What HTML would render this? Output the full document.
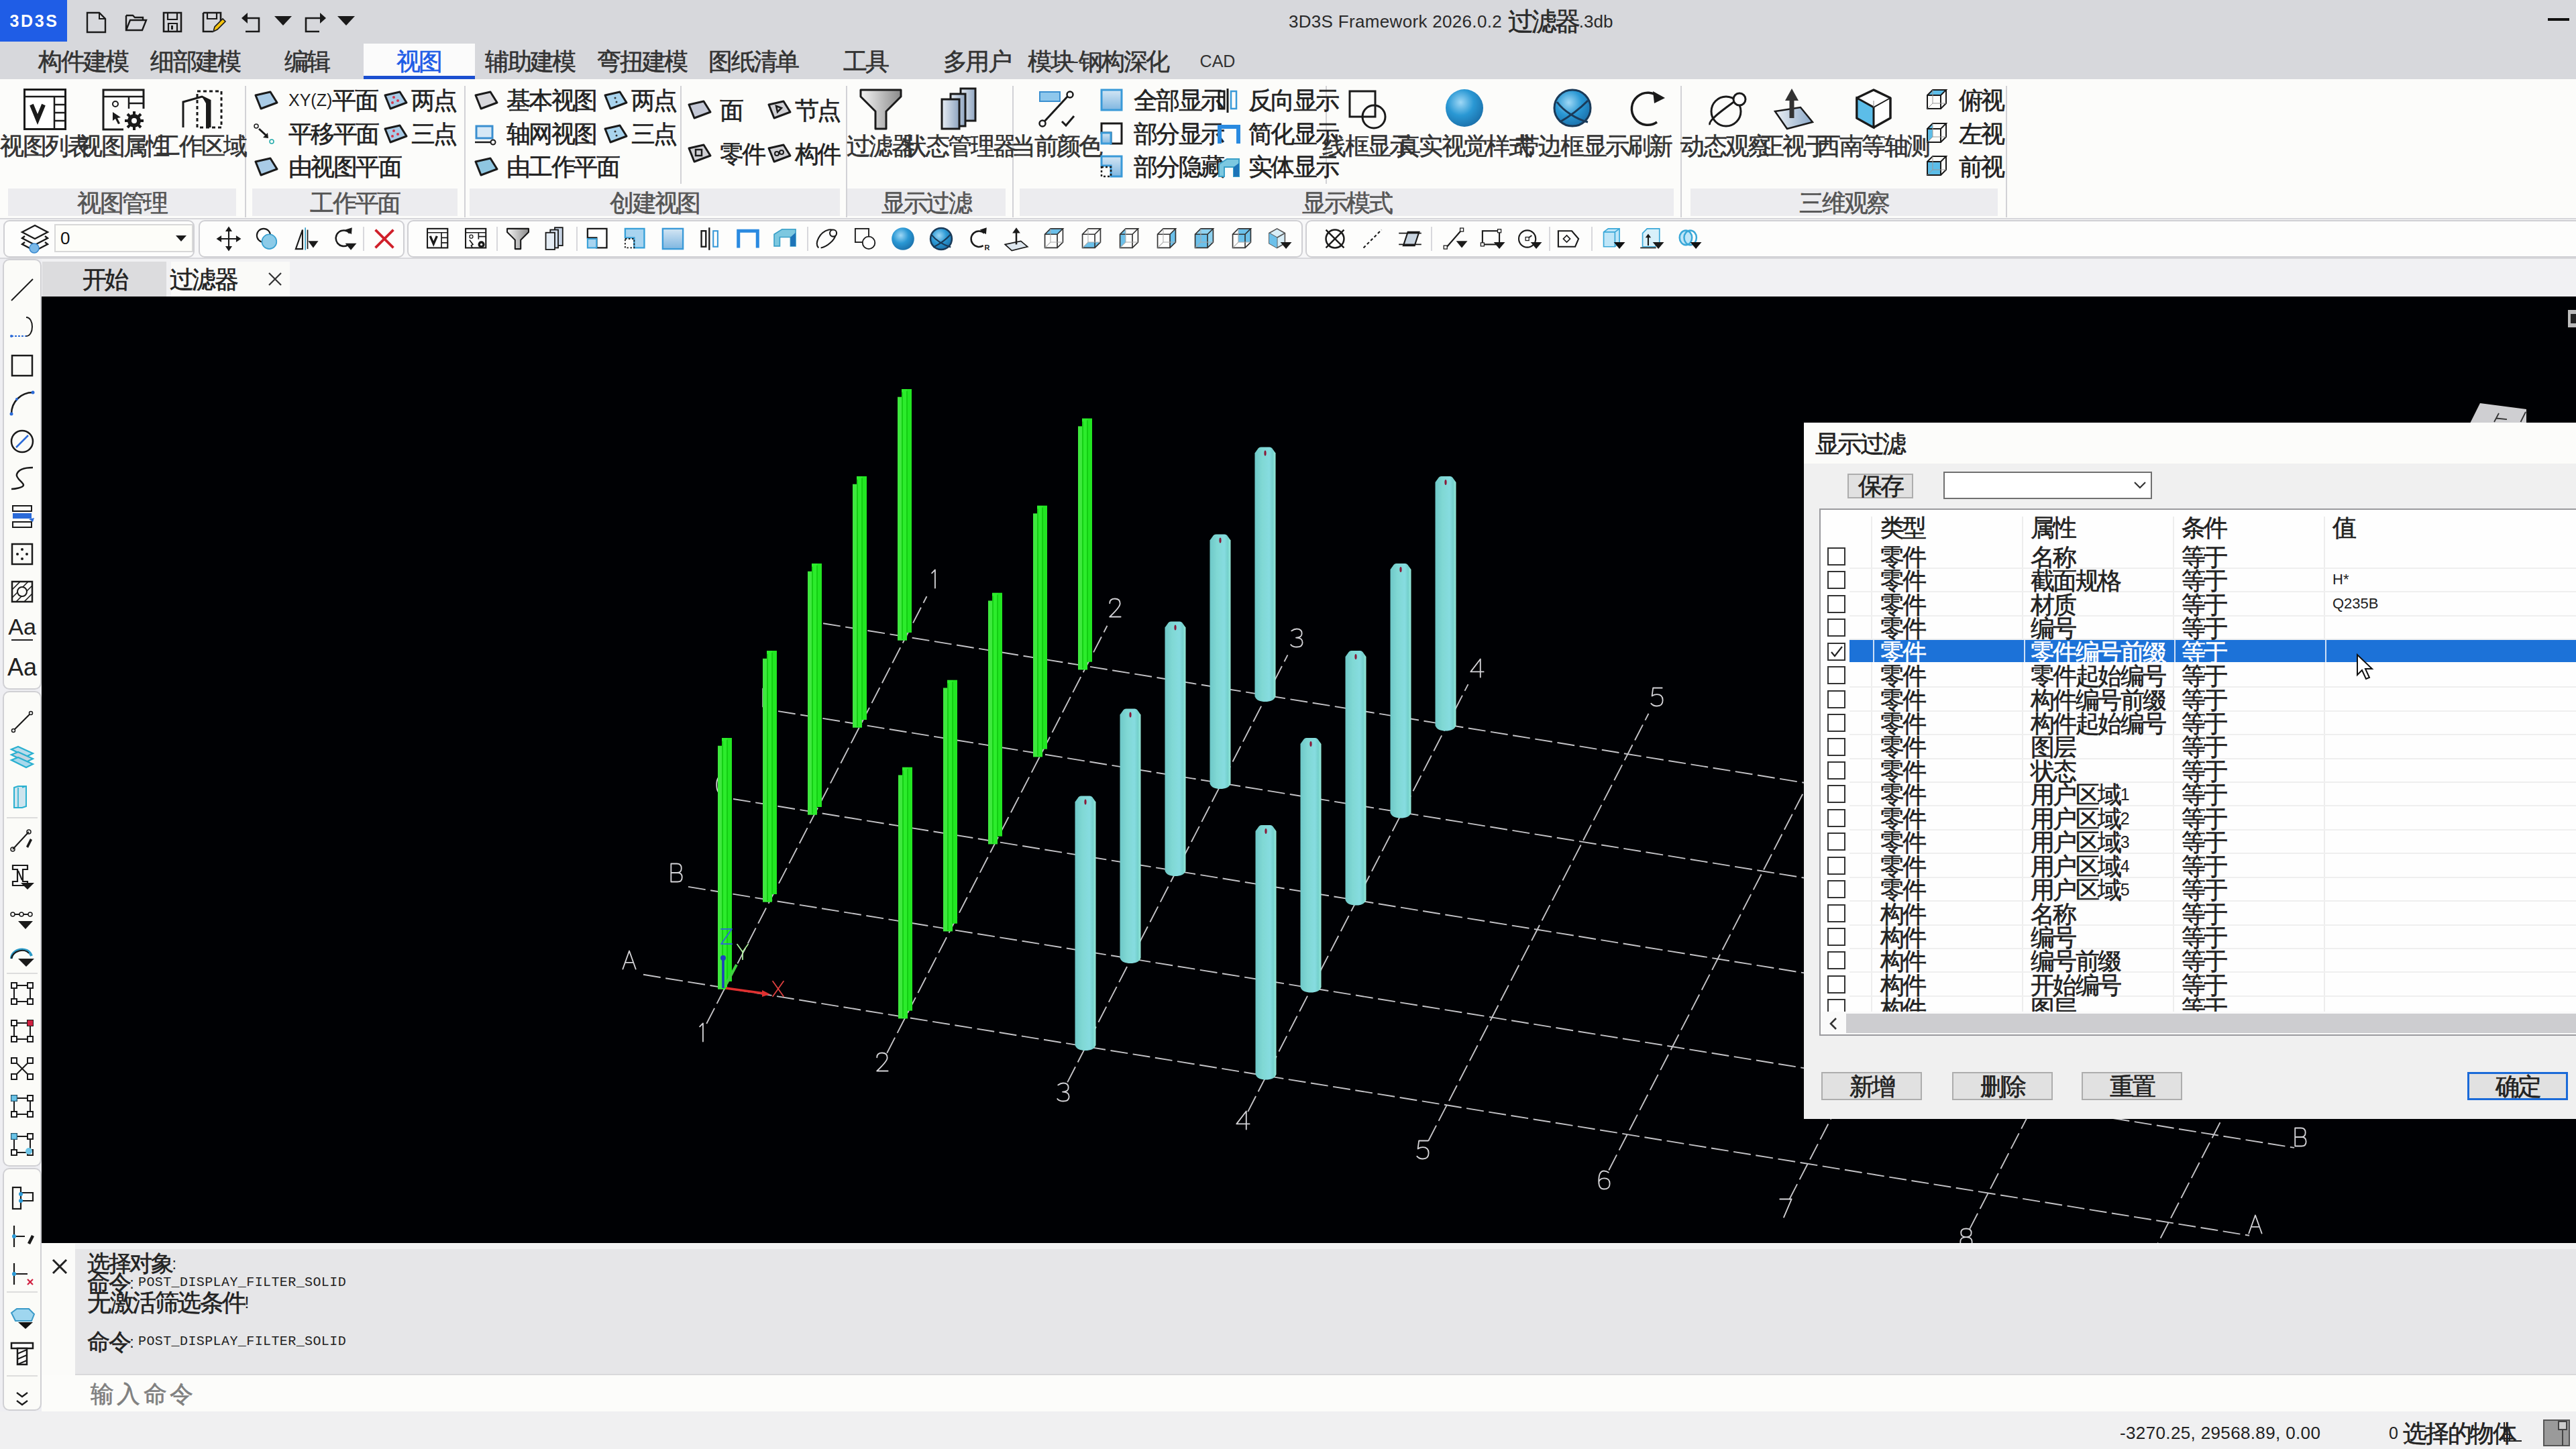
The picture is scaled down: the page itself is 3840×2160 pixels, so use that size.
<!DOCTYPE html>
<html><head><meta charset="utf-8"><title>3D3S Framework</title>
<style>
html,body{margin:0;padding:0}
body{width:3840px;height:2160px;overflow:hidden;position:relative;background:#eeeef2;font-family:"Liberation Sans",sans-serif}
.a{position:absolute}
.t{position:absolute;white-space:nowrap}
.c{font-size:1.45em;letter-spacing:-0.07em;vertical-align:-0.1em;-webkit-text-stroke:0.6px currentColor}
svg{overflow:visible}
</style></head><body>

<div class="a" style="left:0px;top:0px;width:3840px;height:118px;background:#d7d8dc;"></div>
<div class="a" style="left:0px;top:0px;width:100px;height:62px;background:#1f5de6;"></div>
<div class="t" style="top:13.5px;height:35.0px;line-height:35.0px;font-size:25px;color:#ffffff;left:-549.0px;width:1200px;text-align:center;font-weight:bold;letter-spacing:2.6px;">3D3S</div>
<svg class="a" style="left:127px;top:17px;" width="34" height="32" viewBox="0 0 34 32"><path d="M3 2h18l9 9v20H3z" fill="none" stroke="#1a1a1a" stroke-width="2.4"/><path d="M21 2v9h9" fill="none" stroke="#1a1a1a" stroke-width="2"/></svg>
<svg class="a" style="left:186px;top:17px;" width="34" height="32" viewBox="0 0 34 32"><path d="M2 6h10l3 3h12v4" fill="none" stroke="#1a1a1a" stroke-width="2.4"/><path d="M2 6v22h24l6-15H8L2 28" fill="none" stroke="#1a1a1a" stroke-width="2.4"/></svg>
<svg class="a" style="left:241px;top:17px;" width="34" height="32" viewBox="0 0 34 32"><path d="M3 2h26v28H3z" fill="none" stroke="#1a1a1a" stroke-width="2.6"/><path d="M9 2v10h14V2M10 30V18h13v12" fill="none" stroke="#1a1a1a" stroke-width="2.2"/><rect x="14" y="21" width="3" height="6" fill="#1a1a1a"/></svg>
<svg class="a" style="left:300px;top:17px;" width="36" height="32" viewBox="0 0 36 32"><path d="M3 2h26v12M3 2v28h14" fill="none" stroke="#1a1a1a" stroke-width="2.6"/><path d="M9 2v9h14V2" fill="none" stroke="#1a1a1a" stroke-width="2.2"/><path d="M18 30l2-7 12-12 4 4-12 12z" fill="#f4c20d" stroke="#1a1a1a" stroke-width="1.6"/></svg>
<svg class="a" style="left:360px;top:17px;" width="34" height="32" viewBox="0 0 34 32"><path d="M8 10h18v20H6" fill="none" stroke="#1a1a1a" stroke-width="2.6"/><path d="M0 10l9-8v16z" fill="#1a1a1a"/></svg>
<svg class="a" style="left:409px;top:24px;" width="26" height="16" viewBox="0 0 26 16"><path d="M0 0h26L13 14z" fill="#1a1a1a"/></svg>
<svg class="a" style="left:452px;top:17px;" width="34" height="32" viewBox="0 0 34 32"><path d="M26 10H4v20h20" fill="none" stroke="#1a1a1a" stroke-width="2.6"/><path d="M34 10l-9-8v16z" fill="#1a1a1a"/></svg>
<svg class="a" style="left:503px;top:24px;" width="26" height="16" viewBox="0 0 26 16"><path d="M0 0h26L13 14z" fill="#1a1a1a"/></svg>
<div class="t" style="top:13.8px;height:36.4px;line-height:36.4px;font-size:26px;color:#2a2a2a;left:1480.0px;width:1200px;text-align:center;letter-spacing:0.32px;">3D3S Framework 2026.0.2</div>
<div class="t" style="top:13.8px;height:36.4px;line-height:36.4px;font-size:26px;color:#2a2a2a;left:1726.0px;width:1200px;text-align:center;"><span class="c">过滤器</span>.3db</div>
<div class="a" style="left:3798px;top:27px;width:32px;height:4px;background:#111;"></div>
<div class="a" style="left:542px;top:65px;width:166px;height:53px;background:#fbfbfb;"></div>
<div class="a" style="left:542px;top:113px;width:166px;height:5px;background:#1b4fd0;"></div>
<div class="t" style="top:73.5px;height:35.0px;line-height:35.0px;font-size:25px;color:#333;left:-476.0px;width:1200px;text-align:center;"><span class="c">构件建模</span></div>
<div class="t" style="top:73.5px;height:35.0px;line-height:35.0px;font-size:25px;color:#333;left:-309.0px;width:1200px;text-align:center;"><span class="c">细部建模</span></div>
<div class="t" style="top:73.5px;height:35.0px;line-height:35.0px;font-size:25px;color:#333;left:-143.0px;width:1200px;text-align:center;"><span class="c">编辑</span></div>
<div class="t" style="top:73.5px;height:35.0px;line-height:35.0px;font-size:25px;color:#1f5de6;left:24.0px;width:1200px;text-align:center;"><span class="c">视图</span></div>
<div class="t" style="top:73.5px;height:35.0px;line-height:35.0px;font-size:25px;color:#333;left:190.0px;width:1200px;text-align:center;"><span class="c">辅助建模</span></div>
<div class="t" style="top:73.5px;height:35.0px;line-height:35.0px;font-size:25px;color:#333;left:357.0px;width:1200px;text-align:center;"><span class="c">弯扭建模</span></div>
<div class="t" style="top:73.5px;height:35.0px;line-height:35.0px;font-size:25px;color:#333;left:523.0px;width:1200px;text-align:center;"><span class="c">图纸清单</span></div>
<div class="t" style="top:73.5px;height:35.0px;line-height:35.0px;font-size:25px;color:#333;left:690.0px;width:1200px;text-align:center;"><span class="c">工具</span></div>
<div class="t" style="top:73.5px;height:35.0px;line-height:35.0px;font-size:25px;color:#333;left:856.0px;width:1200px;text-align:center;"><span class="c">多用户</span></div>
<div class="t" style="top:73.5px;height:35.0px;line-height:35.0px;font-size:25px;color:#333;left:1037.0px;width:1200px;text-align:center;"><span class="c">模块</span>-<span class="c">钢构深化</span></div>
<div class="t" style="top:73.5px;height:35.0px;line-height:35.0px;font-size:25px;color:#333;left:1215.0px;width:1200px;text-align:center;">CAD</div>
<div class="a" style="left:0px;top:118px;width:3840px;height:208px;background:#fcfcfa;"></div>
<div class="a" style="left:0px;top:325px;width:3840px;height:2px;background:#d6d6da;"></div>
<div class="a" style="left:12px;top:281px;width:340px;height:41px;background:#ececef;"></div>
<div class="t" style="top:284.5px;height:35.0px;line-height:35.0px;font-size:25px;color:#555;left:-418.0px;width:1200px;text-align:center;"><span class="c">视图管理</span></div>
<div class="a" style="left:376px;top:281px;width:306px;height:41px;background:#ececef;"></div>
<div class="t" style="top:284.5px;height:35.0px;line-height:35.0px;font-size:25px;color:#555;left:-71.0px;width:1200px;text-align:center;"><span class="c">工作平面</span></div>
<div class="a" style="left:700px;top:281px;width:552px;height:41px;background:#ececef;"></div>
<div class="t" style="top:284.5px;height:35.0px;line-height:35.0px;font-size:25px;color:#555;left:376.0px;width:1200px;text-align:center;"><span class="c">创建视图</span></div>
<div class="a" style="left:1262px;top:281px;width:237px;height:41px;background:#ececef;"></div>
<div class="t" style="top:284.5px;height:35.0px;line-height:35.0px;font-size:25px;color:#555;left:780.5px;width:1200px;text-align:center;"><span class="c">显示过滤</span></div>
<div class="a" style="left:1520px;top:281px;width:975px;height:41px;background:#ececef;"></div>
<div class="t" style="top:284.5px;height:35.0px;line-height:35.0px;font-size:25px;color:#555;left:1407.5px;width:1200px;text-align:center;"><span class="c">显示模式</span></div>
<div class="a" style="left:2520px;top:281px;width:458px;height:41px;background:#ececef;"></div>
<div class="t" style="top:284.5px;height:35.0px;line-height:35.0px;font-size:25px;color:#555;left:2149.0px;width:1200px;text-align:center;"><span class="c">三维观察</span></div>
<div class="a" style="left:365px;top:128px;width:2px;height:196px;background:#d2d2d6;"></div>
<div class="a" style="left:692px;top:128px;width:2px;height:196px;background:#d2d2d6;"></div>
<div class="a" style="left:1014px;top:128px;width:2px;height:146px;background:#d2d2d6;"></div>
<div class="a" style="left:1261px;top:128px;width:2px;height:196px;background:#d2d2d6;"></div>
<div class="a" style="left:1509px;top:128px;width:2px;height:196px;background:#d2d2d6;"></div>
<div class="a" style="left:1976px;top:128px;width:2px;height:146px;background:#d2d2d6;"></div>
<div class="a" style="left:2505px;top:128px;width:2px;height:196px;background:#d2d2d6;"></div>
<div class="a" style="left:2990px;top:128px;width:2px;height:196px;background:#d2d2d6;"></div>
<svg class="a" style="left:35px;top:132px;" width="64" height="62" viewBox="0 0 64 62"><rect x="1.5" y="1.5" width="61" height="59" fill="#fff" stroke="#1a1a1a" stroke-width="3"/><path d="M2 12h60M46 12v48M46 24h16M46 36h16M46 48h16" stroke="#1a1a1a" stroke-width="2.5" fill="none"/><path d="M12 24l9 22 9-22" fill="none" stroke="#1a1a1a" stroke-width="6"/></svg>
<svg class="a" style="left:152px;top:132px;" width="64" height="62" viewBox="0 0 64 62"><path d="M32 61H2V2h60v28" fill="none" stroke="#1a1a1a" stroke-width="3"/><path d="M2 12h60M40 12v18M40 22h22" stroke="#1a1a1a" stroke-width="2.5" fill="none"/><circle cx="20" cy="23" r="4" fill="none" stroke="#1a1a1a" stroke-width="2"/><path d="M16 35l12 8-5 1 4 8-3 1-4-8-4 3z" fill="#1a1a1a"/><circle cx="48" cy="48" r="10" fill="#1a1a1a"/><circle cx="48" cy="48" r="4" fill="#fff"/><path d="M48 34v28M34 48h28M38 38l20 20M58 38L38 58" stroke="#1a1a1a" stroke-width="4"/><circle cx="48" cy="48" r="4" fill="#fff"/></svg>
<svg class="a" style="left:268px;top:132px;" width="64" height="62" viewBox="0 0 64 62"><path d="M5 58V20l28-8 12 6v40" fill="none" stroke="#1a1a1a" stroke-width="3"/><path d="M33 12l12 6v40h-6V22z" fill="#1a1a1a"/><rect x="26" y="4" width="36" height="54" fill="none" stroke="#1a1a1a" stroke-width="3" stroke-dasharray="5 4"/></svg>
<div class="t" style="top:199.5px;height:35.0px;line-height:35.0px;font-size:25px;color:#333;left:-533.0px;width:1200px;text-align:center;"><span class="c">视图列表</span></div>
<div class="t" style="top:199.5px;height:35.0px;line-height:35.0px;font-size:25px;color:#333;left:-416.0px;width:1200px;text-align:center;"><span class="c">视图属性</span></div>
<div class="t" style="top:199.5px;height:35.0px;line-height:35.0px;font-size:25px;color:#333;left:-300.0px;width:1200px;text-align:center;"><span class="c">工作区域</span></div>
<svg class="a" style="left:378px;top:134px;" width="36" height="30" viewBox="0 0 36 30"><path d="M3 8l22-5 10 16-24 9z" fill="#a9cbe6" stroke="#1a1a1a" stroke-width="3" stroke-linejoin="round"/></svg>
<div class="t" style="top:131.5px;height:35.0px;line-height:35.0px;font-size:25px;color:#222;left:430.0px;">XY(Z)<span class="c">平面</span></div>
<svg class="a" style="left:378px;top:233px;" width="36" height="30" viewBox="0 0 36 30"><path d="M3 8l22-5 10 16-24 9z" fill="#a9cbe6" stroke="#1a1a1a" stroke-width="3" stroke-linejoin="round"/></svg>
<div class="t" style="top:230.5px;height:35.0px;line-height:35.0px;font-size:25px;color:#222;left:430.0px;"><span class="c">由视图平面</span></div>
<svg class="a" style="left:378px;top:184px;" width="36" height="30" viewBox="0 0 36 30"><circle cx="4" cy="4" r="3" fill="none" stroke="#1a1a1a" stroke-width="1.5"/><path d="M8 8l12 11" stroke="#1a1a1a" stroke-width="3"/><path d="M22 22l-8-1 7-7z" fill="#1a1a1a"/><circle cx="27" cy="27" r="3" fill="none" stroke="#2aa" stroke-width="1.5"/></svg>
<div class="t" style="top:181.5px;height:35.0px;line-height:35.0px;font-size:25px;color:#222;left:430.0px;"><span class="c">平移平面</span></div>
<svg class="a" style="left:571px;top:134px;" width="36" height="30" viewBox="0 0 36 30"><path d="M3 8l22-5 10 16-24 9z" fill="#a9cbe6" stroke="#1a1a1a" stroke-width="3" stroke-linejoin="round"/><circle cx="16" cy="11" r="2" fill="#d9354a"/><circle cx="22" cy="16" r="2" fill="#d9354a"/><circle cx="14" cy="19" r="2" fill="#d9354a"/></svg>
<div class="t" style="top:131.5px;height:35.0px;line-height:35.0px;font-size:25px;color:#222;left:46.0px;width:1200px;text-align:center;"><span class="c">两点</span></div>
<svg class="a" style="left:571px;top:184px;" width="36" height="30" viewBox="0 0 36 30"><path d="M3 8l22-5 10 16-24 9z" fill="#a9cbe6" stroke="#1a1a1a" stroke-width="3" stroke-linejoin="round"/><circle cx="16" cy="11" r="2" fill="#d9354a"/><circle cx="22" cy="16" r="2" fill="#d9354a"/><circle cx="14" cy="19" r="2" fill="#d9354a"/></svg>
<div class="t" style="top:181.5px;height:35.0px;line-height:35.0px;font-size:25px;color:#222;left:46.0px;width:1200px;text-align:center;"><span class="c">三点</span></div>
<svg class="a" style="left:706px;top:134px;" width="36" height="30" viewBox="0 0 36 30"><path d="M3 8l22-5 10 16-24 9z" fill="#d8d8dc" stroke="#1a1a1a" stroke-width="3" stroke-linejoin="round"/></svg>
<div class="t" style="top:131.5px;height:35.0px;line-height:35.0px;font-size:25px;color:#222;left:755.0px;"><span class="c">基本视图</span></div>
<svg class="a" style="left:706px;top:233px;" width="36" height="30" viewBox="0 0 36 30"><path d="M3 8l22-5 10 16-24 9z" fill="#8fc6e0" stroke="#1a1a1a" stroke-width="3" stroke-linejoin="round"/></svg>
<div class="t" style="top:230.5px;height:35.0px;line-height:35.0px;font-size:25px;color:#222;left:755.0px;"><span class="c">由工作平面</span></div>
<svg class="a" style="left:706px;top:186px;" width="36" height="30" viewBox="0 0 36 30"><rect x="4" y="2" width="24" height="18" fill="#d6e8f6" stroke="#3a8fd0" stroke-width="3"/><path d="M2 26h24" stroke="#1a1a1a" stroke-width="2.5"/><circle cx="29" cy="26" r="3.5" fill="none" stroke="#1a1a1a" stroke-width="2"/></svg>
<div class="t" style="top:181.5px;height:35.0px;line-height:35.0px;font-size:25px;color:#222;left:755.0px;"><span class="c">轴网视图</span></div>
<svg class="a" style="left:899px;top:134px;" width="36" height="30" viewBox="0 0 36 30"><path d="M3 8l22-5 10 16-24 9z" fill="#a9d4ee" stroke="#1a1a1a" stroke-width="3" stroke-linejoin="round"/><circle cx="18" cy="12" r="1.5" fill="#333"/><circle cx="20" cy="18" r="1.5" fill="#333"/></svg>
<div class="t" style="top:131.5px;height:35.0px;line-height:35.0px;font-size:25px;color:#222;left:374.0px;width:1200px;text-align:center;"><span class="c">两点</span></div>
<svg class="a" style="left:899px;top:184px;" width="36" height="30" viewBox="0 0 36 30"><path d="M3 8l22-5 10 16-24 9z" fill="#a9d4ee" stroke="#1a1a1a" stroke-width="3" stroke-linejoin="round"/><circle cx="18" cy="12" r="1.5" fill="#333"/><circle cx="20" cy="18" r="1.5" fill="#333"/></svg>
<div class="t" style="top:181.5px;height:35.0px;line-height:35.0px;font-size:25px;color:#222;left:374.0px;width:1200px;text-align:center;"><span class="c">三点</span></div>
<svg class="a" style="left:1024px;top:148px;" width="36" height="30" viewBox="0 0 36 30"><path d="M3 8l22-5 10 16-24 9z" fill="#c4c8d6" stroke="#1a1a1a" stroke-width="3" stroke-linejoin="round"/></svg>
<div class="t" style="top:146.5px;height:35.0px;line-height:35.0px;font-size:25px;color:#222;left:1073.0px;"><span class="c">面</span></div>
<svg class="a" style="left:1024px;top:213px;" width="36" height="30" viewBox="0 0 36 30"><path d="M3 8l22-5 10 16-24 9z" fill="#d0d0d4" stroke="#1a1a1a" stroke-width="3" stroke-linejoin="round"/><rect x="13" y="10" width="9" height="9" fill="none" stroke="#1a1a1a" stroke-width="2.5"/></svg>
<div class="t" style="top:211.5px;height:35.0px;line-height:35.0px;font-size:25px;color:#222;left:1073.0px;"><span class="c">零件</span></div>
<svg class="a" style="left:1143px;top:148px;" width="36" height="30" viewBox="0 0 36 30"><path d="M3 8l22-5 10 16-24 9z" fill="#d0d0d4" stroke="#1a1a1a" stroke-width="3" stroke-linejoin="round"/><path d="M14 10l8 3-6 6z" fill="none" stroke="#1a1a1a" stroke-width="2.5"/></svg>
<div class="t" style="top:146.5px;height:35.0px;line-height:35.0px;font-size:25px;color:#222;left:618.0px;width:1200px;text-align:center;"><span class="c">节点</span></div>
<svg class="a" style="left:1143px;top:213px;" width="36" height="30" viewBox="0 0 36 30"><path d="M3 8l22-5 10 16-24 9z" fill="#d0d0d4" stroke="#1a1a1a" stroke-width="3" stroke-linejoin="round"/><circle cx="15" cy="16" r="3" fill="none" stroke="#1a1a1a" stroke-width="2"/><circle cx="22" cy="14" r="3" fill="none" stroke="#1a1a1a" stroke-width="2"/></svg>
<div class="t" style="top:211.5px;height:35.0px;line-height:35.0px;font-size:25px;color:#222;left:618.0px;width:1200px;text-align:center;"><span class="c">构件</span></div>
<svg class="a" style="left:1281px;top:132px;" width="64" height="62" viewBox="0 0 64 62"><defs><linearGradient id="fun" x1="0" y1="0" x2="1" y2="0"><stop offset="0" stop-color="#f4f4f4"/><stop offset="1" stop-color="#8a8a8a"/></linearGradient></defs><path d="M2 2h60v10L40 34v26H24V34L2 12z" fill="url(#fun)" stroke="#1a1a1a" stroke-width="3" stroke-linejoin="round"/></svg>
<svg class="a" style="left:1402px;top:130px;" width="56" height="64" viewBox="0 0 56 64"><defs><linearGradient id="pg" x1="0" y1="0" x2="1" y2="0"><stop offset="0" stop-color="#e8eef4"/><stop offset="1" stop-color="#8ea4c0"/></linearGradient></defs><rect x="30" y="2" width="22" height="48" fill="url(#pg)" stroke="#1a1a1a" stroke-width="3"/><rect x="15" y="10" width="22" height="48" fill="url(#pg)" stroke="#1a1a1a" stroke-width="3"/><rect x="2" y="18" width="26" height="44" fill="url(#pg)" stroke="#1a1a1a" stroke-width="3"/></svg>
<div class="t" style="top:199.5px;height:35.0px;line-height:35.0px;font-size:25px;color:#333;left:712.0px;width:1200px;text-align:center;"><span class="c">过滤器</span></div>
<div class="t" style="top:199.5px;height:35.0px;line-height:35.0px;font-size:25px;color:#333;left:830.0px;width:1200px;text-align:center;"><span class="c">状态管理器</span></div>
<svg class="a" style="left:1548px;top:134px;" width="56" height="56" viewBox="0 0 56 56"><rect x="2" y="3" width="30" height="14" fill="#8ec7ec" stroke="#3a8fd0" stroke-width="2"/><path d="M8 48L45 8" stroke="#1a1a1a" stroke-width="3"/><circle cx="6" cy="50" r="4.5" fill="#fff" stroke="#1a1a1a" stroke-width="2.5"/><circle cx="47" cy="7" r="4.5" fill="#fff" stroke="#1a1a1a" stroke-width="2.5"/><path d="M35 47l6 6 12-14" fill="none" stroke="#1a1a1a" stroke-width="3"/></svg>
<div class="t" style="top:199.5px;height:35.0px;line-height:35.0px;font-size:25px;color:#333;left:975.0px;width:1200px;text-align:center;"><span class="c">当前颜色</span></div>
<svg class="a" style="left:1640px;top:132px;" width="34" height="34" viewBox="0 0 34 34"><defs><linearGradient id="sq" x1="0" y1="0" x2="0" y2="1"><stop offset="0" stop-color="#d4e6f4"/><stop offset="1" stop-color="#7fb6e0"/></linearGradient></defs><rect x="2" y="2" width="30" height="30" fill="url(#sq)" stroke="#3a9ad8" stroke-width="3"/></svg>
<svg class="a" style="left:1640px;top:182px;" width="34" height="34" viewBox="0 0 34 34"><path d="M2 2h30v30H16V16H2z" fill="#fff" stroke="#1a1a1a" stroke-width="3"/><rect x="2" y="16" width="14" height="16" fill="url(#sq)" stroke="#3a9ad8" stroke-width="3"/></svg>
<svg class="a" style="left:1640px;top:231px;" width="34" height="34" viewBox="0 0 34 34"><path d="M2 2h30v30H16V16H2z" fill="url(#sq)" stroke="#3a9ad8" stroke-width="3"/><rect x="2" y="18" width="14" height="14" fill="none" stroke="#1a1a1a" stroke-width="2.5" stroke-dasharray="3 3"/></svg>
<div class="t" style="top:131.5px;height:35.0px;line-height:35.0px;font-size:25px;color:#222;left:1690.0px;"><span class="c">全部显示</span></div>
<div class="t" style="top:181.5px;height:35.0px;line-height:35.0px;font-size:25px;color:#222;left:1690.0px;"><span class="c">部分显示</span></div>
<div class="t" style="top:230.5px;height:35.0px;line-height:35.0px;font-size:25px;color:#222;left:1690.0px;"><span class="c">部分隐藏</span></div>
<svg class="a" style="left:1815px;top:132px;" width="30" height="36" viewBox="0 0 30 36"><rect x="2" y="4" width="8" height="26" fill="none" stroke="#1a1a1a" stroke-width="3"/><path d="M15 0v36" stroke="#1a1a1a" stroke-width="3"/><rect x="20" y="4" width="8" height="26" fill="none" stroke="#3a9ad8" stroke-width="2.5"/></svg>
<svg class="a" style="left:1815px;top:186px;" width="34" height="30" viewBox="0 0 34 30"><path d="M3 28V3h28v25" fill="none" stroke="#2a8ae0" stroke-width="6"/></svg>
<svg class="a" style="left:1815px;top:235px;" width="34" height="30" viewBox="0 0 34 30"><path d="M2 10l12-8h18v26h-8V14H10v14H2z" fill="#7cc8e0" stroke="#3aa0c8" stroke-width="2"/><path d="M24 14l8-6v20h-8z" fill="#1d74b8"/></svg>
<div class="t" style="top:131.5px;height:35.0px;line-height:35.0px;font-size:25px;color:#222;left:1861.0px;"><span class="c">反向显示</span></div>
<div class="t" style="top:181.5px;height:35.0px;line-height:35.0px;font-size:25px;color:#222;left:1861.0px;"><span class="c">简化显示</span></div>
<div class="t" style="top:230.5px;height:35.0px;line-height:35.0px;font-size:25px;color:#222;left:1861.0px;"><span class="c">实体显示</span></div>
<svg class="a" style="left:2010px;top:134px;" width="58" height="58" viewBox="0 0 58 58"><rect x="2" y="2" width="38" height="38" fill="none" stroke="#1a1a1a" stroke-width="3"/><circle cx="38" cy="40" r="17" fill="none" stroke="#1a1a1a" stroke-width="3"/></svg>
<div class="t" style="top:199.5px;height:35.0px;line-height:35.0px;font-size:25px;color:#333;left:1438.0px;width:1200px;text-align:center;"><span class="c">线框显示</span></div>
<svg class="a" style="left:2154px;top:132px;" width="58" height="58" viewBox="0 0 58 58"><defs><radialGradient id="sph" cx="0.4" cy="0.35" r="0.7"><stop offset="0" stop-color="#9fd8f6"/><stop offset="0.5" stop-color="#2a98d4"/><stop offset="1" stop-color="#1a6ea8"/></radialGradient></defs><circle cx="29" cy="29" r="28" fill="url(#sph)"/></svg>
<div class="t" style="top:199.5px;height:35.0px;line-height:35.0px;font-size:25px;color:#333;left:1582.0px;width:1200px;text-align:center;"><span class="c">真实视觉样式</span></div>
<svg class="a" style="left:2315px;top:132px;" width="58" height="58" viewBox="0 0 58 58"><circle cx="29" cy="29" r="27" fill="url(#sph)" stroke="#1a3a58" stroke-width="3"/><path d="M6 20c10 14 30 26 46 30M52 18C40 30 24 42 10 50" fill="none" stroke="#1a3a58" stroke-width="3"/></svg>
<div class="t" style="top:199.5px;height:35.0px;line-height:35.0px;font-size:25px;color:#333;left:1743.0px;width:1200px;text-align:center;"><span class="c">带边框显示</span></div>
<svg class="a" style="left:2430px;top:134px;" width="58" height="56" viewBox="0 0 58 56"><path d="M44 12A24 24 0 1 0 40 48" fill="none" stroke="#1a1a1a" stroke-width="3.5"/><path d="M34 2l18 10-16 8z" fill="#1a1a1a"/></svg>
<div class="t" style="top:199.5px;height:35.0px;line-height:35.0px;font-size:25px;color:#333;left:1858.0px;width:1200px;text-align:center;"><span class="c">刷新</span></div>
<svg class="a" style="left:2543px;top:134px;" width="62" height="58" viewBox="0 0 62 58"><circle cx="30" cy="32" r="22" fill="none" stroke="#1a1a1a" stroke-width="3"/><path d="M6 52C2 46 30 26 50 12" fill="none" stroke="#1a1a1a" stroke-width="3"/><circle cx="50" cy="14" r="9" fill="#fff" stroke="#1a1a1a" stroke-width="3"/></svg>
<div class="t" style="top:199.5px;height:35.0px;line-height:35.0px;font-size:25px;color:#333;left:1972.0px;width:1200px;text-align:center;"><span class="c">动态观察</span></div>
<svg class="a" style="left:2644px;top:130px;" width="60" height="64" viewBox="0 0 60 64"><defs><linearGradient id="pl" x1="0" y1="0" x2="1" y2="0"><stop offset="0" stop-color="#ecf0f4"/><stop offset="1" stop-color="#8aa8c8"/></linearGradient></defs><path d="M2 36l38-6 18 22-38 10z" fill="url(#pl)" stroke="#1a1a1a" stroke-width="2.5"/><path d="M27 46V16" stroke="#333" stroke-width="7"/><path d="M17 20l10-18 10 18z" fill="#333"/></svg>
<div class="t" style="top:199.5px;height:35.0px;line-height:35.0px;font-size:25px;color:#333;left:2074.0px;width:1200px;text-align:center;"><span class="c">正视于</span></div>
<svg class="a" style="left:2766px;top:132px;" width="54" height="60" viewBox="0 0 54 60"><path d="M27 2l25 12v30L27 58 2 44V14z" fill="#fff" stroke="#1a1a1a" stroke-width="3.5" stroke-linejoin="round"/><path d="M2 14l25 14v30L2 44z" fill="#5cbde8" stroke="#1a1a1a" stroke-width="3"/><path d="M27 28l25-14" stroke="#1a1a1a" stroke-width="2"/><path d="M27 28v-10" stroke="#888" stroke-width="1"/></svg>
<div class="t" style="top:199.5px;height:35.0px;line-height:35.0px;font-size:25px;color:#333;left:2192.0px;width:1200px;text-align:center;"><span class="c">西南等轴测</span></div>
<svg class="a" style="left:2871px;top:132px;" width="34" height="34" viewBox="0 0 34 34"><path d="M2 10l8-8h20l-8 8z" fill="#5cbde8"/><path d="M2 10h20v20H2zM2 10l8-8h20l-8 8M22 30l8-8V2" fill="none" stroke="#1a1a1a" stroke-width="2"/><path d="M10 2v20h20M2 30l8-8" fill="none" stroke="#999" stroke-width="1"/></svg>
<svg class="a" style="left:2871px;top:182px;" width="34" height="34" viewBox="0 0 34 34"><path d="M2 10h20v20H2z" fill="none"/><path d="M2 10l8-8v20l-8 8z" fill="#5cbde8"/><path d="M2 10h20v20H2zM2 10l8-8h20l-8 8M22 30l8-8V2" fill="none" stroke="#1a1a1a" stroke-width="2"/><path d="M10 2v20h20M2 30l8-8" fill="none" stroke="#999" stroke-width="1"/></svg>
<svg class="a" style="left:2871px;top:231px;" width="34" height="34" viewBox="0 0 34 34"><path d="M2 10h20v20H2z" fill="#5cbde8"/><path d="M2 10h20v20H2zM2 10l8-8h20l-8 8M22 30l8-8V2" fill="none" stroke="#1a1a1a" stroke-width="2"/><path d="M10 2v20h20M2 30l8-8" fill="none" stroke="#999" stroke-width="1"/></svg>
<div class="t" style="top:131.5px;height:35.0px;line-height:35.0px;font-size:25px;color:#222;left:2920.0px;"><span class="c">俯视</span></div>
<div class="t" style="top:181.5px;height:35.0px;line-height:35.0px;font-size:25px;color:#222;left:2920.0px;"><span class="c">左视</span></div>
<div class="t" style="top:230.5px;height:35.0px;line-height:35.0px;font-size:25px;color:#222;left:2920.0px;"><span class="c">前视</span></div>
<div class="a" style="left:0px;top:327px;width:3840px;height:59px;background:#f7f7f8;"></div>
<div class="a" style="left:0px;top:384px;width:3840px;height:2px;background:#d8d8dc;"></div>
<div class="a" style="left:5px;top:328px;width:285px;height:56px;background:#fdfdfc;border:2px solid #cfcfd3;border-radius:9px;box-sizing:border-box;"></div>
<div class="a" style="left:296px;top:328px;width:307px;height:56px;background:#fdfdfc;border:2px solid #cfcfd3;border-radius:9px;box-sizing:border-box;"></div>
<div class="a" style="left:607px;top:328px;width:1335px;height:56px;background:#fdfdfc;border:2px solid #cfcfd3;border-radius:9px;box-sizing:border-box;"></div>
<div class="a" style="left:1946px;top:328px;width:1914px;height:56px;background:#fdfdfc;border:2px solid #cfcfd3;border-radius:9px;box-sizing:border-box;"></div>
<svg class="a" style="left:31px;top:334px;" width="42" height="44" viewBox="0 0 42 44"><path d="M21 2l19 10-19 10L2 12z" fill="#fff" stroke="#1a1a1a" stroke-width="2.4"/><path d="M6 18l-4 3 19 10 19-10-4-3M6 27l-4 3 19 10 19-10-4-3" fill="none" stroke="#1a1a1a" stroke-width="2.4"/><circle cx="20" cy="36" r="7" fill="#7ab8e8" stroke="#3a8ad0" stroke-width="1.5"/></svg>
<div class="a" style="left:81px;top:334px;width:207px;height:42px;background:#fdfdf9;border:2px solid #d8d8d8;box-sizing:border-box;"></div>
<div class="t" style="top:336.8px;height:36.4px;line-height:36.4px;font-size:26px;color:#111;left:90.0px;">0</div>
<svg class="a" style="left:262px;top:351px;" width="16" height="10" viewBox="0 0 16 10"><path d="M0 0h16L8 9z" fill="#1a1a1a"/></svg>
<svg class="a" style="left:319px;top:334px;" width="44" height="44" viewBox="0 0 44 44"><g transform="translate(22 22) scale(0.84) translate(-22 -22)"><path d="M22 4v36M4 22h36" stroke="#1a1a1a" stroke-width="2.5"/><path d="M22 0l-6 9h12zM22 44l-6-9h12zM0 22l9-6v12zM44 22l-9-6v12z" fill="#1a1a1a"/></g></svg>
<svg class="a" style="left:376px;top:334px;" width="44" height="44" viewBox="0 0 44 44"><g transform="translate(22 22) scale(0.84) translate(-22 -22)"><circle cx="16" cy="16" r="12" fill="#fff" stroke="#1a1a1a" stroke-width="2.5"/><circle cx="26" cy="27" r="13" fill="#8ccbe8" stroke="#38a0d0" stroke-width="2"/></g></svg>
<svg class="a" style="left:434px;top:334px;" width="44" height="44" viewBox="0 0 44 44"><g transform="translate(22 22) scale(0.84) translate(-22 -22)"><path d="M4 40L16 6v34z" fill="none" stroke="#1a1a1a" stroke-width="2.5"/><path d="M21 2v40" stroke="#38a0c8" stroke-width="2"/><path d="M25 6v34" stroke="#1a1a1a" stroke-width="2"/><path d="M26 26h18l-9 12z" fill="#1a1a1a"/></g></svg>
<svg class="a" style="left:491px;top:334px;" width="44" height="44" viewBox="0 0 44 44"><g transform="translate(22 22) scale(0.84) translate(-22 -22)"><path d="M30 32A14 14 0 1 1 32 12" fill="none" stroke="#1a1a1a" stroke-width="3"/><path d="M24 6l12-4-1 12z" fill="#1a1a1a"/><path d="M24 30h20l-10 12z" fill="#1a1a1a"/></g></svg>
<div class="a" style="left:541px;top:338px;width:2px;height:36px;background:#d8d8dc;"></div>
<svg class="a" style="left:551px;top:334px;" width="44" height="44" viewBox="0 0 44 44"><g transform="translate(22 22) scale(0.84) translate(-22 -22)"><path d="M6 6l32 32M38 6L6 38" stroke="#d0202a" stroke-width="4.5"/></g></svg>
<svg class="a" style="left:631px;top:334px;" width="44" height="44" viewBox="0 0 44 44"><g transform="translate(22 22) scale(0.84) translate(-22 -22)"><rect x="3" y="4" width="36" height="34" fill="#fff" stroke="#1a1a1a" stroke-width="2.5"/><path d="M3 11h36M28 11v27M28 20h11M28 29h11" stroke="#1a1a1a" stroke-width="2"/><path d="M8 17l6 14 6-14" fill="none" stroke="#1a1a1a" stroke-width="4"/></g></svg>
<svg class="a" style="left:688px;top:334px;" width="44" height="44" viewBox="0 0 44 44"><g transform="translate(22 22) scale(0.84) translate(-22 -22)"><rect x="3" y="4" width="36" height="34" fill="#fff" stroke="#1a1a1a" stroke-width="2.5"/><path d="M3 11h36M26 11v12M26 18h13" stroke="#1a1a1a" stroke-width="2"/><circle cx="13" cy="18" r="3" fill="none" stroke="#1a1a1a" stroke-width="1.5"/><path d="M10 24l6 8-3 2 2 4" stroke="#1a1a1a" stroke-width="2" fill="none"/><circle cx="31" cy="32" r="6" fill="#1a1a1a"/><circle cx="31" cy="32" r="2" fill="#fff"/></g></svg>
<div class="a" style="left:740px;top:338px;width:2px;height:36px;background:#d8d8dc;"></div>
<svg class="a" style="left:750px;top:334px;" width="44" height="44" viewBox="0 0 44 44"><g transform="translate(22 22) scale(0.84) translate(-22 -22)"><defs><linearGradient id="fun2" x1="0" y1="0" x2="1" y2="0"><stop offset="0" stop-color="#f4f4f4"/><stop offset="1" stop-color="#8a8a8a"/></linearGradient></defs><path d="M3 4h38v6L27 24v16H17V24L3 10z" fill="url(#fun2)" stroke="#1a1a1a" stroke-width="2.5" stroke-linejoin="round"/></g></svg>
<svg class="a" style="left:805px;top:334px;" width="44" height="44" viewBox="0 0 44 44"><g transform="translate(22 22) scale(0.84) translate(-22 -22)"><rect x="22" y="2" width="14" height="32" fill="#c8d4e4" stroke="#1a1a1a" stroke-width="2.2"/><rect x="14" y="6" width="14" height="32" fill="#d4dfec" stroke="#1a1a1a" stroke-width="2.2"/><rect x="6" y="11" width="16" height="30" fill="#e4ecf4" stroke="#1a1a1a" stroke-width="2.2"/></g></svg>
<div class="a" style="left:859px;top:338px;width:2px;height:36px;background:#d8d8dc;"></div>
<svg class="a" style="left:869px;top:334px;" width="44" height="44" viewBox="0 0 44 44"><g transform="translate(22 22) scale(0.84) translate(-22 -22)"><path d="M4 4h34v34H20V20H4z" fill="#fff" stroke="#1a1a1a" stroke-width="2.8"/><rect x="4" y="22" width="16" height="16" fill="#a8d4f0" stroke="#38a0d8" stroke-width="2.5"/></g></svg>
<svg class="a" style="left:925px;top:334px;" width="44" height="44" viewBox="0 0 44 44"><g transform="translate(22 22) scale(0.84) translate(-22 -22)"><path d="M4 4h34v34H20V20H4z" fill="#a8d4f0" stroke="#38a0d8" stroke-width="2.8"/><rect x="4" y="22" width="16" height="16" fill="none" stroke="#1a1a1a" stroke-width="2.2" stroke-dasharray="3 3"/></g></svg>
<svg class="a" style="left:981px;top:334px;" width="44" height="44" viewBox="0 0 44 44"><g transform="translate(22 22) scale(0.84) translate(-22 -22)"><defs><linearGradient id="sq2" x1="0" y1="0" x2="0" y2="1"><stop offset="0" stop-color="#d4e6f4"/><stop offset="1" stop-color="#7fb6e0"/></linearGradient></defs><rect x="4" y="4" width="36" height="36" fill="url(#sq2)" stroke="#3a9ad8" stroke-width="2.8"/></g></svg>
<svg class="a" style="left:1037px;top:334px;" width="44" height="44" viewBox="0 0 44 44"><g transform="translate(22 22) scale(0.84) translate(-22 -22)"><rect x="6" y="8" width="8" height="28" fill="none" stroke="#1a1a1a" stroke-width="2.8"/><path d="M20 2v40" stroke="#1a1a1a" stroke-width="2.8"/><rect x="27" y="8" width="8" height="28" fill="none" stroke="#3a9ad8" stroke-width="2.5"/></g></svg>
<svg class="a" style="left:1093px;top:334px;" width="44" height="44" viewBox="0 0 44 44"><g transform="translate(22 22) scale(0.84) translate(-22 -22)"><path d="M5 38V8h34v30" fill="none" stroke="#2a8ae0" stroke-width="6"/></g></svg>
<svg class="a" style="left:1148px;top:334px;" width="44" height="44" viewBox="0 0 44 44"><g transform="translate(22 22) scale(0.84) translate(-22 -22)"><path d="M3 14l14-9h24v30h-9V19H13v16H3z" fill="#7cc8e0" stroke="#3aa0c8" stroke-width="2"/><path d="M32 19l9-8v24h-9z" fill="#1d74b8"/></g></svg>
<div class="a" style="left:1203px;top:338px;width:2px;height:36px;background:#d8d8dc;"></div>
<svg class="a" style="left:1210px;top:334px;" width="44" height="44" viewBox="0 0 44 44"><g transform="translate(22 22) scale(0.84) translate(-22 -22)"><path d="M8 38c-8-8 2-28 18-32 8-2 14 4 12 10-2 8-14 20-26 22" fill="none" stroke="#1a1a1a" stroke-width="2.5"/><circle cx="34" cy="12" r="6" fill="#fff" stroke="#1a1a1a" stroke-width="2.5"/></g></svg>
<svg class="a" style="left:1268px;top:334px;" width="44" height="44" viewBox="0 0 44 44"><g transform="translate(22 22) scale(0.84) translate(-22 -22)"><rect x="4" y="4" width="24" height="24" fill="none" stroke="#1a1a1a" stroke-width="2.2"/><circle cx="28" cy="29" r="11" fill="#fff" stroke="#1a1a1a" stroke-width="2.2"/></g></svg>
<svg class="a" style="left:1324px;top:334px;" width="44" height="44" viewBox="0 0 44 44"><g transform="translate(22 22) scale(0.84) translate(-22 -22)"><circle cx="22" cy="22" r="20" fill="url(#sph)"/></g></svg>
<svg class="a" style="left:1381px;top:334px;" width="44" height="44" viewBox="0 0 44 44"><g transform="translate(22 22) scale(0.84) translate(-22 -22)"><circle cx="22" cy="22" r="19" fill="url(#sph)" stroke="#1a3a58" stroke-width="3"/><path d="M5 15c8 10 22 18 34 22M39 14C30 24 18 32 8 37" fill="none" stroke="#1a3a58" stroke-width="2.5"/></g></svg>
<svg class="a" style="left:1437px;top:334px;" width="44" height="44" viewBox="0 0 44 44"><g transform="translate(22 22) scale(0.84) translate(-22 -22)"><path d="M30 34A14 14 0 1 1 32 12" fill="none" stroke="#1a1a1a" stroke-width="3"/><path d="M24 6l12-4-1 12z" fill="#1a1a1a"/><text x="32" y="42" font-size="13" font-weight="bold" fill="#1a1a1a" font-family="Liberation Sans">R</text></g></svg>
<svg class="a" style="left:1493px;top:334px;" width="44" height="44" viewBox="0 0 44 44"><g transform="translate(22 22) scale(0.84) translate(-22 -22)"><path d="M2 32l28-6 12 10-28 7z" fill="#dde6ee" stroke="#1a1a1a" stroke-width="2"/><path d="M22 32V10" stroke="#1a1a1a" stroke-width="3"/><path d="M15 12l7-10 7 10z" fill="#1a1a1a"/></g></svg>
<svg class="a" style="left:1549px;top:334px;" width="44" height="44" viewBox="0 0 44 44"><g transform="translate(22 22) scale(0.84) translate(-22 -22)"><path d="M6 14l10-10h22l-10 10z" fill="#6cc0ea"/><path d="M6 14h22v24H6zM6 14l10-10h22l-10 10M28 38l10-10V4" fill="none" stroke="#333" stroke-width="2"/><path d="M16 4v24h22M6 38l10-10" fill="none" stroke="#aaa" stroke-width="1.2"/></g></svg>
<svg class="a" style="left:1605px;top:334px;" width="44" height="44" viewBox="0 0 44 44"><g transform="translate(22 22) scale(0.84) translate(-22 -22)"><path d="M6 38l10-10h22l-10 10z" fill="#6cc0ea"/><path d="M6 14h22v24H6zM6 14l10-10h22l-10 10M28 38l10-10V4" fill="none" stroke="#333" stroke-width="2"/><path d="M16 4v24h22M6 38l10-10" fill="none" stroke="#aaa" stroke-width="1.2"/></g></svg>
<svg class="a" style="left:1661px;top:334px;" width="44" height="44" viewBox="0 0 44 44"><g transform="translate(22 22) scale(0.84) translate(-22 -22)"><path d="M6 14l10-10v24l-10 10z" fill="#6cc0ea"/><path d="M6 14h22v24H6zM6 14l10-10h22l-10 10M28 38l10-10V4" fill="none" stroke="#333" stroke-width="2"/><path d="M16 4v24h22M6 38l10-10" fill="none" stroke="#aaa" stroke-width="1.2"/></g></svg>
<svg class="a" style="left:1717px;top:334px;" width="44" height="44" viewBox="0 0 44 44"><g transform="translate(22 22) scale(0.84) translate(-22 -22)"><path d="M28 14l10-10v24l-10 10z" fill="#6cc0ea"/><path d="M6 14h22v24H6zM6 14l10-10h22l-10 10M28 38l10-10V4" fill="none" stroke="#333" stroke-width="2"/><path d="M16 4v24h22M6 38l10-10" fill="none" stroke="#aaa" stroke-width="1.2"/></g></svg>
<svg class="a" style="left:1773px;top:334px;" width="44" height="44" viewBox="0 0 44 44"><g transform="translate(22 22) scale(0.84) translate(-22 -22)"><path d="M6 14h22v24H6z" fill="#6cc0ea"/><path d="M28 14l10-10v24l-10 10zM6 14l10-10h22l-10 10z" fill="#8fd2f0"/><path d="M6 14h22v24H6zM6 14l10-10h22l-10 10M28 38l10-10V4" fill="none" stroke="#333" stroke-width="2"/><path d="M16 4v24h22M6 38l10-10" fill="none" stroke="#aaa" stroke-width="1.2"/></g></svg>
<svg class="a" style="left:1829px;top:334px;" width="44" height="44" viewBox="0 0 44 44"><g transform="translate(22 22) scale(0.84) translate(-22 -22)"><path d="M16 4h22v24H16z" fill="#6cc0ea"/><path d="M6 14h22v24H6zM6 14l10-10h22l-10 10M28 38l10-10V4" fill="none" stroke="#333" stroke-width="2"/><path d="M16 4v24h22M6 38l10-10" fill="none" stroke="#aaa" stroke-width="1.2"/></g></svg>
<svg class="a" style="left:1885px;top:334px;" width="44" height="44" viewBox="0 0 44 44"><g transform="translate(22 22) scale(0.84) translate(-22 -22)"><path d="M4 12l14-8 14 8v18l-14 8-14-8z" fill="#d8eef8" stroke="#555" stroke-width="2"/><path d="M4 12l14 8 14-8M18 20v18" fill="none" stroke="#555" stroke-width="2"/><path d="M4 12l14 8v18L4 30z" fill="#6cc0ea"/><path d="M24 28h20l-10 12z" fill="#1a1a1a"/></g></svg>
<svg class="a" style="left:1968px;top:334px;" width="44" height="44" viewBox="0 0 44 44"><g transform="translate(22 22) scale(0.84) translate(-22 -22)"><circle cx="22" cy="22" r="16" fill="none" stroke="#1a1a1a" stroke-width="3"/><path d="M6 6l32 32M38 6L6 38" stroke="#1a1a1a" stroke-width="3"/></g></svg>
<svg class="a" style="left:2024px;top:334px;" width="44" height="44" viewBox="0 0 44 44"><g transform="translate(22 22) scale(0.84) translate(-22 -22)"><path d="M6 38L38 6" stroke="#1a1a1a" stroke-width="2.5" stroke-dasharray="5 4"/></g></svg>
<svg class="a" style="left:2080px;top:334px;" width="44" height="44" viewBox="0 0 44 44"><g transform="translate(22 22) scale(0.84) translate(-22 -22)"><path d="M10 34l8-24h20l-8 24z" fill="#c8d4e0" stroke="#1a1a1a" stroke-width="2.5"/><path d="M2 12h40M2 32h40" stroke="#1a1a1a" stroke-width="2"/></g></svg>
<div class="a" style="left:2133px;top:338px;width:2px;height:36px;background:#d8d8dc;"></div>
<svg class="a" style="left:2147px;top:334px;" width="44" height="44" viewBox="0 0 44 44"><g transform="translate(22 22) scale(0.84) translate(-22 -22)"><path d="M6 38L34 6" stroke="#1a1a1a" stroke-width="2.5"/><rect x="2" y="34" width="6" height="6" fill="#fff" stroke="#1a1a1a" stroke-width="1.5"/><rect x="31" y="3" width="6" height="6" fill="#fff" stroke="#1a1a1a" stroke-width="1.5"/><path d="M24 26h20l-10 12z" fill="#1a1a1a"/></g></svg>
<svg class="a" style="left:2203px;top:334px;" width="44" height="44" viewBox="0 0 44 44"><g transform="translate(22 22) scale(0.84) translate(-22 -22)"><rect x="4" y="8" width="30" height="24" fill="none" stroke="#1a1a1a" stroke-width="2.5"/><rect x="1" y="29" width="6" height="6" fill="#fff" stroke="#1a1a1a" stroke-width="1.5"/><rect x="31" y="5" width="6" height="6" fill="#fff" stroke="#1a1a1a" stroke-width="1.5"/><path d="M24 28h20l-10 12z" fill="#1a1a1a"/></g></svg>
<svg class="a" style="left:2258px;top:334px;" width="44" height="44" viewBox="0 0 44 44"><g transform="translate(22 22) scale(0.84) translate(-22 -22)"><circle cx="18" cy="22" r="15" fill="none" stroke="#1a1a1a" stroke-width="2.5"/><path d="M18 22l8-6" stroke="#1a1a1a" stroke-width="2"/><rect x="15" y="19" width="6" height="6" fill="#fff" stroke="#1a1a1a" stroke-width="1.5"/><path d="M24 28h20l-10 12z" fill="#1a1a1a"/></g></svg>
<div class="a" style="left:2309px;top:338px;width:2px;height:36px;background:#d8d8dc;"></div>
<svg class="a" style="left:2316px;top:334px;" width="44" height="44" viewBox="0 0 44 44"><g transform="translate(22 22) scale(0.84) translate(-22 -22)"><path d="M4 8h24l12 14-6 14H4z" fill="none" stroke="#1a1a1a" stroke-width="2.5"/><path d="M19 16l6 6-6 6-6-6z" fill="none" stroke="#1a1a1a" stroke-width="2"/></g></svg>
<div class="a" style="left:2372px;top:338px;width:2px;height:36px;background:#d8d8dc;"></div>
<svg class="a" style="left:2382px;top:334px;" width="44" height="44" viewBox="0 0 44 44"><g transform="translate(22 22) scale(0.84) translate(-22 -22)"><path d="M6 10l8-6h20v24l-8 8H6z" fill="#bfe6f8" stroke="#3aa8d8" stroke-width="2"/><path d="M6 10h20v26M26 10l8-6" fill="none" stroke="#3aa8d8" stroke-width="2"/><path d="M24 28h20l-10 12z" fill="#111"/></g></svg>
<svg class="a" style="left:2440px;top:334px;" width="44" height="44" viewBox="0 0 44 44"><g transform="translate(22 22) scale(0.84) translate(-22 -22)"><path d="M6 12l8-8h22v24l-8 8H6z" fill="#d8f0fa" stroke="#3aa8d8" stroke-width="2"/><path d="M16 34V18" stroke="#1a1a1a" stroke-width="2.5"/><path d="M11 20l5-7 5 7z" fill="#1a1a1a"/><path d="M2 38h28" stroke="#1a1a1a" stroke-width="2"/><path d="M24 28h20l-10 12z" fill="#1a1a1a"/></g></svg>
<svg class="a" style="left:2496px;top:334px;" width="44" height="44" viewBox="0 0 44 44"><g transform="translate(22 22) scale(0.84) translate(-22 -22)"><ellipse cx="16" cy="20" rx="11" ry="13" fill="#bfe6f8" stroke="#3aa8d8" stroke-width="3"/><ellipse cx="24" cy="20" rx="11" ry="13" fill="none" stroke="#3aa8d8" stroke-width="3"/><path d="M24 28h20l-10 12z" fill="#111"/></g></svg>
<div class="a" style="left:62px;top:386px;width:3778px;height:56px;background:#f1f1f3;"></div>
<div class="a" style="left:63px;top:390px;width:185px;height:52px;background:#dcdcde;"></div>
<div class="a" style="left:255px;top:390px;width:177px;height:52px;background:#fafaf8;"></div>
<div class="t" style="top:398.5px;height:35.0px;line-height:35.0px;font-size:25px;color:#222;left:-444.0px;width:1200px;text-align:center;"><span class="c">开始</span></div>
<div class="t" style="top:398.5px;height:35.0px;line-height:35.0px;font-size:25px;color:#222;left:-297.0px;width:1200px;text-align:center;"><span class="c">过滤器</span></div>
<svg class="a" style="left:399px;top:405px;" width="22" height="22" viewBox="0 0 22 22"><path d="M2 2l18 18M20 2L2 20" stroke="#333" stroke-width="2.2"/></svg>
<div class="a" style="left:4px;top:386px;width:58px;height:642px;background:#fbfbf8;border:2px solid #d0d0d4;border-radius:10px;box-sizing:border-box;"></div>
<div class="a" style="left:4px;top:1030px;width:58px;height:709px;background:#fbfbf8;border:2px solid #d0d0d4;border-radius:10px;box-sizing:border-box;"></div>
<div class="a" style="left:4px;top:1741px;width:58px;height:362px;background:#fbfbf8;border:2px solid #d0d0d4;border-radius:10px;box-sizing:border-box;"></div>
<svg class="a" style="left:13px;top:412px;" width="40" height="40" viewBox="0 0 40 40"><path d="M4 36L36 4" stroke="#1a1a1a" stroke-width="2"/></svg>
<svg class="a" style="left:13px;top:467px;" width="40" height="40" viewBox="0 0 40 40"><path d="M4 34h22" stroke="#2a6ad8" stroke-width="2" stroke-dasharray="3 2"/><path d="M26 34c12 0 12-28 0-28" fill="none" stroke="#1a1a1a" stroke-width="2"/><circle cx="4" cy="34" r="2" fill="#2a6ad8"/></svg>
<svg class="a" style="left:13px;top:525px;" width="40" height="40" viewBox="0 0 40 40"><rect x="5" y="5" width="30" height="30" fill="none" stroke="#1a1a1a" stroke-width="2.5"/></svg>
<svg class="a" style="left:13px;top:581px;" width="40" height="40" viewBox="0 0 40 40"><path d="M4 36C4 18 18 4 36 4" fill="none" stroke="#1a1a1a" stroke-width="2.5"/><circle cx="4" cy="36" r="2.5" fill="#2a6ad8"/><circle cx="36" cy="4" r="2.5" fill="#2a6ad8"/><circle cx="12" cy="14" r="2" fill="#2a6ad8"/></svg>
<svg class="a" style="left:13px;top:638px;" width="40" height="40" viewBox="0 0 40 40"><circle cx="20" cy="20" r="16" fill="none" stroke="#1a1a1a" stroke-width="2.5"/><path d="M11 29L29 11" stroke="#2a6ad8" stroke-width="2.5"/></svg>
<svg class="a" style="left:13px;top:693px;" width="40" height="40" viewBox="0 0 40 40"><path d="M36 4C20 4 14 8 12 14s10 12 10 16-14 6-18 6" fill="none" stroke="#1a1a1a" stroke-width="2.5"/></svg>
<svg class="a" style="left:13px;top:750px;" width="40" height="40" viewBox="0 0 40 40"><rect x="6" y="4" width="28" height="8" fill="none" stroke="#1a1a1a" stroke-width="2"/><rect x="6" y="15" width="28" height="8" fill="#2a6ad8"/><rect x="6" y="28" width="28" height="8" fill="none" stroke="#1a1a1a" stroke-width="2"/><path d="M30 24l8-2-2 6z" fill="#2a6ad8"/></svg>
<svg class="a" style="left:13px;top:806px;" width="40" height="40" viewBox="0 0 40 40"><rect x="5" y="5" width="30" height="30" fill="none" stroke="#1a1a1a" stroke-width="2.5"/><circle cx="20" cy="13" r="2" fill="#1a1a1a"/><circle cx="13" cy="20" r="2" fill="#1a1a1a"/><circle cx="27" cy="20" r="2" fill="#1a1a1a"/><circle cx="20" cy="27" r="2" fill="#1a1a1a"/></svg>
<svg class="a" style="left:13px;top:862px;" width="40" height="40" viewBox="0 0 40 40"><rect x="5" y="5" width="30" height="30" fill="none" stroke="#1a1a1a" stroke-width="2.5"/><path d="M5 17L17 5M5 29L29 5M11 35L35 11M23 35l12-12" stroke="#1a1a1a" stroke-width="1.6"/><circle cx="20" cy="20" r="7" fill="#fbfbf8" stroke="#1a1a1a" stroke-width="2"/></svg>
<div class="t" style="top:911.2px;height:47.6px;line-height:47.6px;font-size:34px;color:#222;left:-567.0px;width:1200px;text-align:center;">Aa</div>
<div class="a" style="left:17px;top:953px;width:32px;height:2px;background:#222;"></div>
<div class="t" style="top:969.8px;height:50.4px;line-height:50.4px;font-size:36px;color:#222;left:-567.0px;width:1200px;text-align:center;">Aa</div>
<svg class="a" style="left:13px;top:1056px;" width="40" height="40" viewBox="0 0 40 40"><path d="M8 32L32 8" stroke="#1a1a1a" stroke-width="2.2"/><circle cx="7" cy="33" r="2.5" fill="#fff" stroke="#1a1a1a" stroke-width="1.5"/><circle cx="33" cy="7" r="2.5" fill="#fff" stroke="#1a1a1a" stroke-width="1.5"/></svg>
<svg class="a" style="left:13px;top:1109px;" width="40" height="40" viewBox="0 0 40 40"><path d="M4 8l10-4 22 10-10 5z" fill="#b8dcec" stroke="#2ab0d0" stroke-width="2.2"/><path d="M4 16l10-4 22 10-10 5z" fill="#c4d4e0" stroke="#2ab0d0" stroke-width="2.2"/><path d="M4 24l10-4 22 10-10 5z" fill="#a8d8ec" stroke="#2ab0d0" stroke-width="2.2"/></svg>
<svg class="a" style="left:13px;top:1168px;" width="40" height="40" viewBox="0 0 40 40"><path d="M8 6l6-2h12v30l-6 2H8z" fill="#cde4ee" stroke="#2ab0d0" stroke-width="2"/><path d="M14 6v30M20 6l6-2" fill="none" stroke="#2ab0d0" stroke-width="1.6"/></svg>
<div class="a" style="left:10px;top:1218px;width:46px;height:2px;background:#ddd;"></div>
<svg class="a" style="left:13px;top:1232px;" width="40" height="40" viewBox="0 0 40 40"><path d="M6 34L30 8" stroke="#1a1a1a" stroke-width="2"/><circle cx="6" cy="34" r="3" fill="none" stroke="#1a1a1a" stroke-width="1.5"/><circle cx="30" cy="8" r="3" fill="none" stroke="#1a1a1a" stroke-width="1.5"/><path d="M26 30l6-12 3 2-6 12z" fill="#1a1a1a"/></svg>
<svg class="a" style="left:13px;top:1286px;" width="40" height="40" viewBox="0 0 40 40"><path d="M6 4h22v6h-7v18h7v6H6v-6h7V10H6z" fill="#fff" stroke="#1a1a1a" stroke-width="2.2"/><path d="M14 12l6 14" stroke="#1a1a1a" stroke-width="2"/><path d="M18 30h20l-10 10z" fill="#1a1a1a"/></svg>
<svg class="a" style="left:13px;top:1349px;" width="40" height="40" viewBox="0 0 40 40"><path d="M4 14h28" stroke="#1a1a1a" stroke-width="2"/><circle cx="6" cy="14" r="3" fill="#fff" stroke="#1a1a1a" stroke-width="1.5"/><circle cx="19" cy="14" r="3" fill="#fff" stroke="#1a1a1a" stroke-width="1.5"/><circle cx="32" cy="14" r="3" fill="#fff" stroke="#1a1a1a" stroke-width="1.5"/><path d="M14 24h22l-11 12z" fill="#1a1a1a"/></svg>
<svg class="a" style="left:13px;top:1403px;" width="40" height="40" viewBox="0 0 40 40"><path d="M4 26C4 12 28 6 34 22" fill="none" stroke="#2a9ac8" stroke-width="4"/><path d="M4 26C6 14 24 10 30 18" fill="none" stroke="#1a1a1a" stroke-width="2"/><path d="M14 26h24l-12 12z" fill="#1a1a1a"/></svg>
<div class="a" style="left:10px;top:1450px;width:46px;height:2px;background:#ddd;"></div>
<svg class="a" style="left:13px;top:1461px;" width="40" height="40" viewBox="0 0 40 40"><rect x="8" y="8" width="24" height="24" fill="none" stroke="#1a1a1a" stroke-width="2"/><rect x="4" y="4" width="8" height="8" fill="#fff" stroke="#1a1a1a" stroke-width="2"/><rect x="28" y="4" width="8" height="8" fill="#fff" stroke="#1a1a1a" stroke-width="2"/><rect x="4" y="28" width="8" height="8" fill="#fff" stroke="#1a1a1a" stroke-width="2"/><rect x="28" y="28" width="8" height="8" fill="#fff" stroke="#1a1a1a" stroke-width="2"/></svg>
<svg class="a" style="left:13px;top:1517px;" width="40" height="40" viewBox="0 0 40 40"><rect x="8" y="8" width="24" height="24" fill="none" stroke="#1a1a1a" stroke-width="2"/><rect x="4" y="4" width="8" height="8" fill="#fff" stroke="#1a1a1a" stroke-width="2"/><rect x="28" y="4" width="8" height="8" fill="#fff" stroke="#1a1a1a" stroke-width="2"/><rect x="4" y="28" width="8" height="8" fill="#fff" stroke="#1a1a1a" stroke-width="2"/><rect x="28" y="28" width="8" height="8" fill="#fff" stroke="#1a1a1a" stroke-width="2"/><rect x="28" y="4" width="8" height="8" fill="#d02040"/></svg>
<svg class="a" style="left:13px;top:1573px;" width="40" height="40" viewBox="0 0 40 40"><path d="M12 12l16 16M28 12L12 28" stroke="#1a1a1a" stroke-width="2"/><rect x="4" y="4" width="8" height="8" fill="#fff" stroke="#1a1a1a" stroke-width="2"/><rect x="28" y="4" width="8" height="8" fill="#fff" stroke="#1a1a1a" stroke-width="2"/><rect x="4" y="28" width="8" height="8" fill="#fff" stroke="#1a1a1a" stroke-width="2"/><rect x="28" y="28" width="8" height="8" fill="#fff" stroke="#1a1a1a" stroke-width="2"/></svg>
<svg class="a" style="left:13px;top:1629px;" width="40" height="40" viewBox="0 0 40 40"><rect x="8" y="8" width="24" height="24" fill="none" stroke="#1a1a1a" stroke-width="2"/><rect x="4" y="4" width="8" height="8" fill="#fff" stroke="#1a1a1a" stroke-width="2"/><rect x="28" y="4" width="8" height="8" fill="#fff" stroke="#1a1a1a" stroke-width="2"/><rect x="4" y="28" width="8" height="8" fill="#fff" stroke="#1a1a1a" stroke-width="2"/><rect x="28" y="28" width="8" height="8" fill="#fff" stroke="#1a1a1a" stroke-width="2"/><rect x="4" y="4" width="8" height="8" fill="#6cc4e6" stroke="#3a9ac8"/></svg>
<svg class="a" style="left:13px;top:1686px;" width="40" height="40" viewBox="0 0 40 40"><rect x="8" y="8" width="24" height="24" fill="none" stroke="#1a1a1a" stroke-width="2"/><rect x="4" y="4" width="8" height="8" fill="#fff" stroke="#1a1a1a" stroke-width="2"/><rect x="28" y="4" width="8" height="8" fill="#fff" stroke="#1a1a1a" stroke-width="2"/><rect x="4" y="28" width="8" height="8" fill="#fff" stroke="#1a1a1a" stroke-width="2"/><rect x="28" y="28" width="8" height="8" fill="#fff" stroke="#1a1a1a" stroke-width="2"/><rect x="4" y="4" width="8" height="8" fill="#6cc4e6" stroke="#3a9ac8"/><circle cx="30" cy="30" r="5" fill="#6cc4e6"/></svg>
<svg class="a" style="left:13px;top:1766px;" width="40" height="40" viewBox="0 0 40 40"><rect x="6" y="4" width="12" height="32" fill="none" stroke="#1a1a1a" stroke-width="2.2"/><path d="M18 12h18v12H18" fill="none" stroke="#1a1a1a" stroke-width="2.2"/><circle cx="18" cy="14" r="3" fill="#2a9ad8"/><circle cx="18" cy="24" r="3" fill="#2a9ad8"/></svg>
<svg class="a" style="left:13px;top:1823px;" width="40" height="40" viewBox="0 0 40 40"><path d="M8 4v32M8 20h16" stroke="#1a1a1a" stroke-width="2.2"/><circle cx="8" cy="20" r="3" fill="#2a9ad8"/><path d="M28 30l6-12 4 2-6 12z" fill="#1a1a1a"/></svg>
<svg class="a" style="left:13px;top:1879px;" width="40" height="40" viewBox="0 0 40 40"><path d="M8 4v32M8 20h20" stroke="#1a1a1a" stroke-width="2.2"/><circle cx="8" cy="20" r="3" fill="#2a9ad8"/><path d="M28 28l8 8M36 28l-8 8" stroke="#d02040" stroke-width="2.2"/></svg>
<div class="a" style="left:10px;top:1925px;width:46px;height:2px;background:#ddd;"></div>
<svg class="a" style="left:13px;top:1945px;" width="40" height="40" viewBox="0 0 40 40"><path d="M4 12l8-6h18l8 8-4 10H10z" fill="#9fd6ef" stroke="#3a9ac8" stroke-width="2"/><path d="M14 26h22l-11 10z" fill="#111"/></svg>
<svg class="a" style="left:13px;top:1998px;" width="40" height="40" viewBox="0 0 40 40"><path d="M4 4h32v8H4z" fill="#fff" stroke="#1a1a1a" stroke-width="2.5"/><path d="M13 12h14v24H13z" fill="#fff" stroke="#1a1a1a" stroke-width="2.5"/><path d="M13 20l14-6M13 28l14-6M13 36l14-6" stroke="#1a1a1a" stroke-width="2"/></svg>
<div class="a" style="left:10px;top:2050px;width:46px;height:2px;background:#ddd;"></div>
<svg class="a" style="left:13px;top:2068px;" width="40" height="40" viewBox="0 0 40 40"><path d="M12 8l8 6 8-6M12 20l8 6 8-6" fill="none" stroke="#1a1a1a" stroke-width="2.2"/></svg>
<div class="a" style="left:62px;top:442px;width:3778px;height:1411px;background:#000104;"></div>
<svg class="a" style="left:62px;top:442px;overflow:hidden" width="3778" height="1411" viewBox="62 442 3778 1411"><g stroke="#c4c4c8" stroke-width="1.9" stroke-dasharray="26 7.6" fill="none"><line x1="959.0" y1="1452.8" x2="3353.1" y2="1841.8"/><line x1="1026.0" y1="1321.9" x2="3420.1" y2="1710.9"/><line x1="1093.0" y1="1191.0" x2="3487.1" y2="1580.0"/><line x1="1160.0" y1="1060.1" x2="3554.1" y2="1449.1"/><line x1="1227.0" y1="929.2" x2="3621.1" y2="1318.2"/><line x1="1053.2" y1="1526.0" x2="1381.5" y2="889.0"/><line x1="1322.2" y1="1569.7" x2="1650.5" y2="932.7"/><line x1="1591.2" y1="1613.4" x2="1919.5" y2="976.4"/><line x1="1860.2" y1="1657.1" x2="2188.5" y2="1020.1"/><line x1="2129.2" y1="1700.8" x2="2457.5" y2="1063.8"/><line x1="2398.2" y1="1744.5" x2="2726.5" y2="1107.5"/><line x1="2667.2" y1="1788.2" x2="2995.5" y2="1151.2"/><line x1="2936.2" y1="1831.9" x2="3264.5" y2="1194.9"/><line x1="3205.2" y1="1875.6" x2="3533.5" y2="1238.6"/></g><path transform="translate(1383.3,849.5) scale(1.93)" d="M3 2.5L5.5 0V14" fill="none" stroke="#d4d4d8" stroke-width="0.95" stroke-linecap="round" stroke-linejoin="round"/><path transform="translate(1652.3,892.5) scale(1.93)" d="M1 3.5Q1 0 5 0Q9 0 9 3.8Q9 6.5 1 14H9.5" fill="none" stroke="#d4d4d8" stroke-width="0.95" stroke-linecap="round" stroke-linejoin="round"/><path transform="translate(1923.3,937.5) scale(1.93)" d="M1 1.5Q3 0 5 0Q9 0 9 3.5Q9 6.8 4.5 6.8Q9.5 6.8 9.5 10.5Q9.5 14 5 14Q2 14 0.5 12.2" fill="none" stroke="#d4d4d8" stroke-width="0.95" stroke-linecap="round" stroke-linejoin="round"/><path transform="translate(2192.3,982.5) scale(1.93)" d="M7.5 14V0L0 9.8H10" fill="none" stroke="#d4d4d8" stroke-width="0.95" stroke-linecap="round" stroke-linejoin="round"/><path transform="translate(2460.3,1025.5) scale(1.93)" d="M9 0H2L1.2 6.2Q3 5 5 5Q9.5 5 9.5 9.5Q9.5 14 5 14Q2 14 0.5 12" fill="none" stroke="#d4d4d8" stroke-width="0.95" stroke-linecap="round" stroke-linejoin="round"/><path transform="translate(1037.3,1525.5) scale(1.93)" d="M3 2.5L5.5 0V14" fill="none" stroke="#d4d4d8" stroke-width="0.95" stroke-linecap="round" stroke-linejoin="round"/><path transform="translate(1305.3,1569.5) scale(1.93)" d="M1 3.5Q1 0 5 0Q9 0 9 3.8Q9 6.5 1 14H9.5" fill="none" stroke="#d4d4d8" stroke-width="0.95" stroke-linecap="round" stroke-linejoin="round"/><path transform="translate(1575.3,1614.5) scale(1.93)" d="M1 1.5Q3 0 5 0Q9 0 9 3.5Q9 6.8 4.5 6.8Q9.5 6.8 9.5 10.5Q9.5 14 5 14Q2 14 0.5 12.2" fill="none" stroke="#d4d4d8" stroke-width="0.95" stroke-linecap="round" stroke-linejoin="round"/><path transform="translate(1843.3,1656.5) scale(1.93)" d="M7.5 14V0L0 9.8H10" fill="none" stroke="#d4d4d8" stroke-width="0.95" stroke-linecap="round" stroke-linejoin="round"/><path transform="translate(2111.3,1700.5) scale(1.93)" d="M9 0H2L1.2 6.2Q3 5 5 5Q9.5 5 9.5 9.5Q9.5 14 5 14Q2 14 0.5 12" fill="none" stroke="#d4d4d8" stroke-width="0.95" stroke-linecap="round" stroke-linejoin="round"/><path transform="translate(2381.3,1745.5) scale(1.93)" d="M8.5 1.2Q7 0 5 0Q1 0 1 8Q1 14 5 14Q9.5 14 9.5 9.8Q9.5 5.6 5.2 5.6Q2 5.6 1 8.5" fill="none" stroke="#d4d4d8" stroke-width="0.95" stroke-linecap="round" stroke-linejoin="round"/><path transform="translate(2652.3,1787.5) scale(1.93)" d="M0.5 0H9.5L3.5 14" fill="none" stroke="#d4d4d8" stroke-width="0.95" stroke-linecap="round" stroke-linejoin="round"/><path transform="translate(2921.3,1831.5) scale(1.93)" d="M5 6.5Q1 6.5 1 3.3Q1 0 5 0Q9 0 9 3.3Q9 6.5 5 6.5Q0.5 6.5 0.5 10.2Q0.5 14 5 14Q9.5 14 9.5 10.2Q9.5 6.5 5 6.5Z" fill="none" stroke="#d4d4d8" stroke-width="0.95" stroke-linecap="round" stroke-linejoin="round"/><path transform="translate(928.4,1417.5) scale(1.93)" d="M0 14L5 0L10 14M2 9H8" fill="none" stroke="#d4d4d8" stroke-width="0.95" stroke-linecap="round" stroke-linejoin="round"/><path transform="translate(998.4,1287.5) scale(1.93)" d="M1 7H6Q9.5 7 9.5 10.5Q9.5 14 6 14H1V0H5.5Q9 0 9 3.5Q9 7 5.5 7" fill="none" stroke="#d4d4d8" stroke-width="0.95" stroke-linecap="round" stroke-linejoin="round"/><path transform="translate(1067.3,1156.5) scale(1.93)" d="M9.5 2.5Q8 0 5 0Q0.5 0 0.5 7Q0.5 14 5 14Q8 14 9.5 11.5" fill="none" stroke="#d4d4d8" stroke-width="0.95" stroke-linecap="round" stroke-linejoin="round"/><path transform="translate(1135.3,1026.5) scale(1.93)" d="M1 0V14H4.5Q10 14 10 7Q10 0 4.5 0Z" fill="none" stroke="#d4d4d8" stroke-width="0.95" stroke-linecap="round" stroke-linejoin="round"/><path transform="translate(3419.3,1681.5) scale(1.93)" d="M1 7H6Q9.5 7 9.5 10.5Q9.5 14 6 14H1V0H5.5Q9 0 9 3.5Q9 7 5.5 7" fill="none" stroke="#d4d4d8" stroke-width="0.95" stroke-linecap="round" stroke-linejoin="round"/><path transform="translate(3352.3,1811.5) scale(1.93)" d="M0 14L5 0L10 14M2 9H8" fill="none" stroke="#d4d4d8" stroke-width="0.95" stroke-linecap="round" stroke-linejoin="round"/><defs><linearGradient id="cy" x1="0" y1="0" x2="1" y2="0"><stop offset="0" stop-color="#6ec8c8"/><stop offset="0.35" stop-color="#80d8d4"/><stop offset="0.7" stop-color="#86dce0"/><stop offset="0.86" stop-color="#74d0cc"/><stop offset="1" stop-color="#98ecdc"/></linearGradient></defs><rect x="1338.0" y="591.7" width="6" height="363" fill="#3ee83e"/><rect x="1344.0" y="580.0" width="8" height="374.7" fill="#2cec2c"/><rect x="1352.0" y="580.0" width="7" height="363" fill="#22e622"/><rect x="1344.3" y="584.7" width="1.4" height="368" fill="#0cc40c"/><rect x="1351.3" y="582.7" width="1.4" height="360" fill="#0cc40c"/><rect x="1607.0" y="635.4" width="6" height="363" fill="#3ee83e"/><rect x="1613.0" y="623.7" width="8" height="374.7" fill="#2cec2c"/><rect x="1621.0" y="623.7" width="7" height="363" fill="#22e622"/><rect x="1613.3" y="628.4" width="1.4" height="368" fill="#0cc40c"/><rect x="1620.3" y="626.4" width="1.4" height="360" fill="#0cc40c"/><path d="M1870.5 675.4L1875.5 668.4Q1877.0 666.4 1879.5 666.4H1892.5Q1895.0 666.4 1896.5 668.4L1901.5 675.4V1037.9C1899.5 1043.9 1893.5 1045.9 1886.0 1045.9C1878.5 1045.9 1872.5 1043.9 1870.5 1037.9Z" fill="url(#cy)"/><ellipse cx="1886.0" cy="675.4" rx="1.6" ry="4" fill="#8a1a3a"/><rect x="1271.0" y="721.7" width="6" height="363" fill="#3ee83e"/><rect x="1277.0" y="710.0" width="8" height="374.7" fill="#2cec2c"/><rect x="1285.0" y="710.0" width="7" height="363" fill="#22e622"/><rect x="1277.3" y="714.7" width="1.4" height="368" fill="#0cc40c"/><rect x="1284.3" y="712.7" width="1.4" height="360" fill="#0cc40c"/><path d="M2139.5 719.1L2144.5 712.1Q2146.0 710.1 2148.5 710.1H2161.5Q2164.0 710.1 2165.5 712.1L2170.5 719.1V1081.6C2168.5 1087.6 2162.5 1089.6 2155.0 1089.6C2147.5 1089.6 2141.5 1087.6 2139.5 1081.6Z" fill="url(#cy)"/><ellipse cx="2155.0" cy="719.1" rx="1.6" ry="4" fill="#8a1a3a"/><rect x="1540.0" y="765.4" width="6" height="363" fill="#3ee83e"/><rect x="1546.0" y="753.7" width="8" height="374.7" fill="#2cec2c"/><rect x="1554.0" y="753.7" width="7" height="363" fill="#22e622"/><rect x="1546.3" y="758.4" width="1.4" height="368" fill="#0cc40c"/><rect x="1553.3" y="756.4" width="1.4" height="360" fill="#0cc40c"/><path d="M1803.5 805.4L1808.5 798.4Q1810.0 796.4 1812.5 796.4H1825.5Q1828.0 796.4 1829.5 798.4L1834.5 805.4V1167.9C1832.5 1173.9 1826.5 1175.9 1819.0 1175.9C1811.5 1175.9 1805.5 1173.9 1803.5 1167.9Z" fill="url(#cy)"/><ellipse cx="1819.0" cy="805.4" rx="1.6" ry="4" fill="#8a1a3a"/><rect x="1204.0" y="851.7" width="6" height="363" fill="#3ee83e"/><rect x="1210.0" y="840.0" width="8" height="374.7" fill="#2cec2c"/><rect x="1218.0" y="840.0" width="7" height="363" fill="#22e622"/><rect x="1210.3" y="844.7" width="1.4" height="368" fill="#0cc40c"/><rect x="1217.3" y="842.7" width="1.4" height="360" fill="#0cc40c"/><path d="M2072.5 849.1L2077.5 842.1Q2079.0 840.1 2081.5 840.1H2094.5Q2097.0 840.1 2098.5 842.1L2103.5 849.1V1211.6C2101.5 1217.6 2095.5 1219.6 2088.0 1219.6C2080.5 1219.6 2074.5 1217.6 2072.5 1211.6Z" fill="url(#cy)"/><ellipse cx="2088.0" cy="849.1" rx="1.6" ry="4" fill="#8a1a3a"/><rect x="1473.0" y="895.4" width="6" height="363" fill="#3ee83e"/><rect x="1479.0" y="883.7" width="8" height="374.7" fill="#2cec2c"/><rect x="1487.0" y="883.7" width="7" height="363" fill="#22e622"/><rect x="1479.3" y="888.4" width="1.4" height="368" fill="#0cc40c"/><rect x="1486.3" y="886.4" width="1.4" height="360" fill="#0cc40c"/><path d="M1736.5 935.4L1741.5 928.4Q1743.0 926.4 1745.5 926.4H1758.5Q1761.0 926.4 1762.5 928.4L1767.5 935.4V1297.9C1765.5 1303.9 1759.5 1305.9 1752.0 1305.9C1744.5 1305.9 1738.5 1303.9 1736.5 1297.9Z" fill="url(#cy)"/><ellipse cx="1752.0" cy="935.4" rx="1.6" ry="4" fill="#8a1a3a"/><rect x="1137.0" y="981.7" width="6" height="363" fill="#3ee83e"/><rect x="1143.0" y="970.0" width="8" height="374.7" fill="#2cec2c"/><rect x="1151.0" y="970.0" width="7" height="363" fill="#22e622"/><rect x="1143.3" y="974.7" width="1.4" height="368" fill="#0cc40c"/><rect x="1150.3" y="972.7" width="1.4" height="360" fill="#0cc40c"/><path d="M2005.5 979.1L2010.5 972.1Q2012.0 970.1 2014.5 970.1H2027.5Q2030.0 970.1 2031.5 972.1L2036.5 979.1V1341.6C2034.5 1347.6 2028.5 1349.6 2021.0 1349.6C2013.5 1349.6 2007.5 1347.6 2005.5 1341.6Z" fill="url(#cy)"/><ellipse cx="2021.0" cy="979.1" rx="1.6" ry="4" fill="#8a1a3a"/><rect x="1406.0" y="1025.4" width="6" height="363" fill="#3ee83e"/><rect x="1412.0" y="1013.7" width="8" height="374.7" fill="#2cec2c"/><rect x="1420.0" y="1013.7" width="7" height="363" fill="#22e622"/><rect x="1412.3" y="1018.4" width="1.4" height="368" fill="#0cc40c"/><rect x="1419.3" y="1016.4" width="1.4" height="360" fill="#0cc40c"/><path d="M1669.5 1065.4L1674.5 1058.4Q1676.0 1056.4 1678.5 1056.4H1691.5Q1694.0 1056.4 1695.5 1058.4L1700.5 1065.4V1427.9C1698.5 1433.9 1692.5 1435.9 1685.0 1435.9C1677.5 1435.9 1671.5 1433.9 1669.5 1427.9Z" fill="url(#cy)"/><ellipse cx="1685.0" cy="1065.4" rx="1.6" ry="4" fill="#8a1a3a"/><rect x="1070.0" y="1111.7" width="6" height="363" fill="#3ee83e"/><rect x="1076.0" y="1100.0" width="8" height="374.7" fill="#2cec2c"/><rect x="1084.0" y="1100.0" width="7" height="363" fill="#22e622"/><rect x="1076.3" y="1104.7" width="1.4" height="368" fill="#0cc40c"/><rect x="1083.3" y="1102.7" width="1.4" height="360" fill="#0cc40c"/><path d="M1938.5 1109.1L1943.5 1102.1Q1945.0 1100.1 1947.5 1100.1H1960.5Q1963.0 1100.1 1964.5 1102.1L1969.5 1109.1V1471.6C1967.5 1477.6 1961.5 1479.6 1954.0 1479.6C1946.5 1479.6 1940.5 1477.6 1938.5 1471.6Z" fill="url(#cy)"/><ellipse cx="1954.0" cy="1109.1" rx="1.6" ry="4" fill="#8a1a3a"/><rect x="1339.0" y="1155.4" width="6" height="363" fill="#3ee83e"/><rect x="1345.0" y="1143.7" width="8" height="374.7" fill="#2cec2c"/><rect x="1353.0" y="1143.7" width="7" height="363" fill="#22e622"/><rect x="1345.3" y="1148.4" width="1.4" height="368" fill="#0cc40c"/><rect x="1352.3" y="1146.4" width="1.4" height="360" fill="#0cc40c"/><path d="M1602.5 1195.4L1607.5 1188.4Q1609.0 1186.4 1611.5 1186.4H1624.5Q1627.0 1186.4 1628.5 1188.4L1633.5 1195.4V1557.9C1631.5 1563.9 1625.5 1565.9 1618.0 1565.9C1610.5 1565.9 1604.5 1563.9 1602.5 1557.9Z" fill="url(#cy)"/><ellipse cx="1618.0" cy="1195.4" rx="1.6" ry="4" fill="#8a1a3a"/><path d="M1871.5 1239.1L1876.5 1232.1Q1878.0 1230.1 1880.5 1230.1H1893.5Q1896.0 1230.1 1897.5 1232.1L1902.5 1239.1V1601.6C1900.5 1607.6 1894.5 1609.6 1887.0 1609.6C1879.5 1609.6 1873.5 1607.6 1871.5 1601.6Z" fill="url(#cy)"/><ellipse cx="1887.0" cy="1239.1" rx="1.6" ry="4" fill="#8a1a3a"/><path d="M1082 1473L1140 1481" stroke="#e03030" stroke-width="3.5"/><path d="M1148 1482l-12-6v10z" fill="#e03030"/><path transform="translate(1152.0,1462.8) scale(1.6)" d="M0 0L10 14M10 0L0 14" fill="none" stroke="#e04040" stroke-width="1.1" stroke-linecap="round" stroke-linejoin="round"/><path d="M1078 1473V1428" stroke="#2040c0" stroke-width="3.5"/><circle cx="1078" cy="1428" r="4" fill="#2040c0"/><path transform="translate(1075.0,1384.8) scale(1.6)" d="M0 0H10L0 14H10" fill="none" stroke="#3060e0" stroke-width="1.1" stroke-linecap="round" stroke-linejoin="round"/><path d="M1082 1468l16-30" stroke="#40d040" stroke-width="4"/><path transform="translate(1099.0,1407.8) scale(1.6)" d="M0 0L5 7L10 0M5 7V14" fill="none" stroke="#b0f0a0" stroke-width="1.1" stroke-linecap="round" stroke-linejoin="round"/><path d="M3682 631l15-30 69 9v21z" fill="#cfcfd2"/><path d="M3725 616l-7 13M3721 623.5l16 1.6M3765 614l-7.5 15" stroke="#333" stroke-width="1.8"/><rect x="3828" y="462" width="12" height="26" fill="#bbb"/><rect x="3832" y="468" width="8" height="14" fill="#222"/></svg>
<div class="a" style="left:2689px;top:630px;width:1151px;height:1038px;background:#f0f0f0;"></div>
<div class="a" style="left:2689px;top:630px;width:1151px;height:61px;background:#fcfcfa;"></div>
<div class="t" style="top:643.5px;height:35.0px;line-height:35.0px;font-size:25px;color:#222;left:2706.0px;"><span class="c">显示过滤</span></div>
<div class="a" style="left:2754px;top:706px;width:98px;height:37px;background:#e1e1e1;border:2px solid #adadad;box-sizing:border-box;"></div>
<div class="t" style="top:706.5px;height:35.0px;line-height:35.0px;font-size:25px;color:#222;left:2203.0px;width:1200px;text-align:center;"><span class="c">保存</span></div>
<div class="a" style="left:2897px;top:703px;width:311px;height:41px;background:#ffffff;border:2px solid #707070;box-sizing:border-box;"></div>
<svg class="a" style="left:3180px;top:716px;" width="20" height="14" viewBox="0 0 20 14"><path d="M2 3l8 8 8-8" fill="none" stroke="#333" stroke-width="2.2"/></svg>
<div class="a" style="left:2712px;top:758px;width:1128px;height:786px;background:#fefefe;border:2px solid #9a9a9e;border-right:none;box-sizing:border-box;"></div>
<div class="t" style="top:768.5px;height:35.0px;line-height:35.0px;font-size:25px;color:#222;left:2803.0px;"><span class="c">类型</span></div>
<div class="t" style="top:768.5px;height:35.0px;line-height:35.0px;font-size:25px;color:#222;left:3027.0px;"><span class="c">属性</span></div>
<div class="t" style="top:768.5px;height:35.0px;line-height:35.0px;font-size:25px;color:#222;left:3252.0px;"><span class="c">条件</span></div>
<div class="t" style="top:768.5px;height:35.0px;line-height:35.0px;font-size:25px;color:#222;left:3477.0px;"><span class="c">值</span></div>
<div class="a" style="left:2789px;top:770px;width:2px;height:738px;background:#ededed;"></div>
<div class="a" style="left:3014px;top:770px;width:2px;height:738px;background:#ededed;"></div>
<div class="a" style="left:3239px;top:770px;width:2px;height:738px;background:#ededed;"></div>
<div class="a" style="left:3464px;top:770px;width:2px;height:738px;background:#ededed;"></div>
<div class="a" style="left:2714px;top:800px;width:1126px;height:708px;overflow:hidden">
<div class="a" style="left:43px;top:46px;width:1083px;height:2px;background:#efefef;"></div>
<div class="a" style="left:10px;top:16px;width:27px;height:27px;background:#ffffff;border:2px solid #333;box-sizing:border-box;"></div>
<div class="t" style="top:12.9px;height:35.0px;line-height:35.0px;font-size:25px;color:#222;left:89.0px;"><span class="c">零件</span></div>
<div class="t" style="top:12.9px;height:35.0px;line-height:35.0px;font-size:25px;color:#222;left:313.0px;"><span class="c">名称</span></div>
<div class="t" style="top:12.9px;height:35.0px;line-height:35.0px;font-size:25px;color:#222;left:538.0px;"><span class="c">等于</span></div>
<div class="a" style="left:43px;top:81px;width:1083px;height:2px;background:#efefef;"></div>
<div class="a" style="left:10px;top:51px;width:27px;height:27px;background:#ffffff;border:2px solid #333;box-sizing:border-box;"></div>
<div class="t" style="top:48.3px;height:35.0px;line-height:35.0px;font-size:25px;color:#222;left:89.0px;"><span class="c">零件</span></div>
<div class="t" style="top:48.3px;height:35.0px;line-height:35.0px;font-size:25px;color:#222;left:313.0px;"><span class="c">截面规格</span></div>
<div class="t" style="top:48.3px;height:35.0px;line-height:35.0px;font-size:25px;color:#222;left:538.0px;"><span class="c">等于</span></div>
<div class="t" style="top:49.0px;height:30.8px;line-height:30.8px;font-size:22px;color:#222;left:763.0px;">H*</div>
<div class="a" style="left:43px;top:117px;width:1083px;height:2px;background:#efefef;"></div>
<div class="a" style="left:10px;top:87px;width:27px;height:27px;background:#ffffff;border:2px solid #333;box-sizing:border-box;"></div>
<div class="t" style="top:83.8px;height:35.0px;line-height:35.0px;font-size:25px;color:#222;left:89.0px;"><span class="c">零件</span></div>
<div class="t" style="top:83.8px;height:35.0px;line-height:35.0px;font-size:25px;color:#222;left:313.0px;"><span class="c">材质</span></div>
<div class="t" style="top:83.8px;height:35.0px;line-height:35.0px;font-size:25px;color:#222;left:538.0px;"><span class="c">等于</span></div>
<div class="t" style="top:84.5px;height:30.8px;line-height:30.8px;font-size:22px;color:#222;left:763.0px;">Q235B</div>
<div class="a" style="left:43px;top:152px;width:1083px;height:2px;background:#efefef;"></div>
<div class="a" style="left:10px;top:122px;width:27px;height:27px;background:#ffffff;border:2px solid #333;box-sizing:border-box;"></div>
<div class="t" style="top:119.2px;height:35.0px;line-height:35.0px;font-size:25px;color:#222;left:89.0px;"><span class="c">零件</span></div>
<div class="t" style="top:119.2px;height:35.0px;line-height:35.0px;font-size:25px;color:#222;left:313.0px;"><span class="c">编号</span></div>
<div class="t" style="top:119.2px;height:35.0px;line-height:35.0px;font-size:25px;color:#222;left:538.0px;"><span class="c">等于</span></div>
<div class="a" style="left:43px;top:154px;width:1083px;height:33px;background:#1c72d8;"></div>
<div class="a" style="left:78px;top:154px;width:2px;height:33px;background:#cfe0f6;"></div>
<div class="a" style="left:303px;top:154px;width:2px;height:33px;background:#cfe0f6;"></div>
<div class="a" style="left:527px;top:154px;width:2px;height:33px;background:#cfe0f6;"></div>
<div class="a" style="left:752px;top:154px;width:2px;height:33px;background:#cfe0f6;"></div>
<div class="a" style="left:10px;top:158px;width:27px;height:27px;background:#ffffff;border:2px solid #333;box-sizing:border-box;"></div>
<svg class="a" style="left:13px;top:161px;" width="21" height="21" viewBox="0 0 21 21"><path d="M3 11l5 6 11-14" fill="none" stroke="#222" stroke-width="2.2"/></svg>
<div class="t" style="top:154.7px;height:35.0px;line-height:35.0px;font-size:25px;color:#ffffff;left:89.0px;"><span class="c">零件</span></div>
<div class="t" style="top:154.7px;height:35.0px;line-height:35.0px;font-size:25px;color:#ffffff;left:313.0px;"><span class="c">零件编号前缀</span></div>
<div class="t" style="top:154.7px;height:35.0px;line-height:35.0px;font-size:25px;color:#ffffff;left:538.0px;"><span class="c">等于</span></div>
<div class="a" style="left:43px;top:223px;width:1083px;height:2px;background:#efefef;"></div>
<div class="a" style="left:10px;top:193px;width:27px;height:27px;background:#ffffff;border:2px solid #333;box-sizing:border-box;"></div>
<div class="t" style="top:190.1px;height:35.0px;line-height:35.0px;font-size:25px;color:#222;left:89.0px;"><span class="c">零件</span></div>
<div class="t" style="top:190.1px;height:35.0px;line-height:35.0px;font-size:25px;color:#222;left:313.0px;"><span class="c">零件起始编号</span></div>
<div class="t" style="top:190.1px;height:35.0px;line-height:35.0px;font-size:25px;color:#222;left:538.0px;"><span class="c">等于</span></div>
<div class="a" style="left:43px;top:259px;width:1083px;height:2px;background:#efefef;"></div>
<div class="a" style="left:10px;top:229px;width:27px;height:27px;background:#ffffff;border:2px solid #333;box-sizing:border-box;"></div>
<div class="t" style="top:225.5px;height:35.0px;line-height:35.0px;font-size:25px;color:#222;left:89.0px;"><span class="c">零件</span></div>
<div class="t" style="top:225.5px;height:35.0px;line-height:35.0px;font-size:25px;color:#222;left:313.0px;"><span class="c">构件编号前缀</span></div>
<div class="t" style="top:225.5px;height:35.0px;line-height:35.0px;font-size:25px;color:#222;left:538.0px;"><span class="c">等于</span></div>
<div class="a" style="left:43px;top:294px;width:1083px;height:2px;background:#efefef;"></div>
<div class="a" style="left:10px;top:264px;width:27px;height:27px;background:#ffffff;border:2px solid #333;box-sizing:border-box;"></div>
<div class="t" style="top:261.0px;height:35.0px;line-height:35.0px;font-size:25px;color:#222;left:89.0px;"><span class="c">零件</span></div>
<div class="t" style="top:261.0px;height:35.0px;line-height:35.0px;font-size:25px;color:#222;left:313.0px;"><span class="c">构件起始编号</span></div>
<div class="t" style="top:261.0px;height:35.0px;line-height:35.0px;font-size:25px;color:#222;left:538.0px;"><span class="c">等于</span></div>
<div class="a" style="left:43px;top:330px;width:1083px;height:2px;background:#efefef;"></div>
<div class="a" style="left:10px;top:300px;width:27px;height:27px;background:#ffffff;border:2px solid #333;box-sizing:border-box;"></div>
<div class="t" style="top:296.4px;height:35.0px;line-height:35.0px;font-size:25px;color:#222;left:89.0px;"><span class="c">零件</span></div>
<div class="t" style="top:296.4px;height:35.0px;line-height:35.0px;font-size:25px;color:#222;left:313.0px;"><span class="c">图层</span></div>
<div class="t" style="top:296.4px;height:35.0px;line-height:35.0px;font-size:25px;color:#222;left:538.0px;"><span class="c">等于</span></div>
<div class="a" style="left:43px;top:365px;width:1083px;height:2px;background:#efefef;"></div>
<div class="a" style="left:10px;top:335px;width:27px;height:27px;background:#ffffff;border:2px solid #333;box-sizing:border-box;"></div>
<div class="t" style="top:331.9px;height:35.0px;line-height:35.0px;font-size:25px;color:#222;left:89.0px;"><span class="c">零件</span></div>
<div class="t" style="top:331.9px;height:35.0px;line-height:35.0px;font-size:25px;color:#222;left:313.0px;"><span class="c">状态</span></div>
<div class="t" style="top:331.9px;height:35.0px;line-height:35.0px;font-size:25px;color:#222;left:538.0px;"><span class="c">等于</span></div>
<div class="a" style="left:43px;top:400px;width:1083px;height:2px;background:#efefef;"></div>
<div class="a" style="left:10px;top:370px;width:27px;height:27px;background:#ffffff;border:2px solid #333;box-sizing:border-box;"></div>
<div class="t" style="top:367.3px;height:35.0px;line-height:35.0px;font-size:25px;color:#222;left:89.0px;"><span class="c">零件</span></div>
<div class="t" style="top:367.3px;height:35.0px;line-height:35.0px;font-size:25px;color:#222;left:313.0px;"><span class="c">用户区域</span>1</div>
<div class="t" style="top:367.3px;height:35.0px;line-height:35.0px;font-size:25px;color:#222;left:538.0px;"><span class="c">等于</span></div>
<div class="a" style="left:43px;top:436px;width:1083px;height:2px;background:#efefef;"></div>
<div class="a" style="left:10px;top:406px;width:27px;height:27px;background:#ffffff;border:2px solid #333;box-sizing:border-box;"></div>
<div class="t" style="top:402.7px;height:35.0px;line-height:35.0px;font-size:25px;color:#222;left:89.0px;"><span class="c">零件</span></div>
<div class="t" style="top:402.7px;height:35.0px;line-height:35.0px;font-size:25px;color:#222;left:313.0px;"><span class="c">用户区域</span>2</div>
<div class="t" style="top:402.7px;height:35.0px;line-height:35.0px;font-size:25px;color:#222;left:538.0px;"><span class="c">等于</span></div>
<div class="a" style="left:43px;top:471px;width:1083px;height:2px;background:#efefef;"></div>
<div class="a" style="left:10px;top:441px;width:27px;height:27px;background:#ffffff;border:2px solid #333;box-sizing:border-box;"></div>
<div class="t" style="top:438.2px;height:35.0px;line-height:35.0px;font-size:25px;color:#222;left:89.0px;"><span class="c">零件</span></div>
<div class="t" style="top:438.2px;height:35.0px;line-height:35.0px;font-size:25px;color:#222;left:313.0px;"><span class="c">用户区域</span>3</div>
<div class="t" style="top:438.2px;height:35.0px;line-height:35.0px;font-size:25px;color:#222;left:538.0px;"><span class="c">等于</span></div>
<div class="a" style="left:43px;top:507px;width:1083px;height:2px;background:#efefef;"></div>
<div class="a" style="left:10px;top:477px;width:27px;height:27px;background:#ffffff;border:2px solid #333;box-sizing:border-box;"></div>
<div class="t" style="top:473.6px;height:35.0px;line-height:35.0px;font-size:25px;color:#222;left:89.0px;"><span class="c">零件</span></div>
<div class="t" style="top:473.6px;height:35.0px;line-height:35.0px;font-size:25px;color:#222;left:313.0px;"><span class="c">用户区域</span>4</div>
<div class="t" style="top:473.6px;height:35.0px;line-height:35.0px;font-size:25px;color:#222;left:538.0px;"><span class="c">等于</span></div>
<div class="a" style="left:43px;top:542px;width:1083px;height:2px;background:#efefef;"></div>
<div class="a" style="left:10px;top:512px;width:27px;height:27px;background:#ffffff;border:2px solid #333;box-sizing:border-box;"></div>
<div class="t" style="top:509.1px;height:35.0px;line-height:35.0px;font-size:25px;color:#222;left:89.0px;"><span class="c">零件</span></div>
<div class="t" style="top:509.1px;height:35.0px;line-height:35.0px;font-size:25px;color:#222;left:313.0px;"><span class="c">用户区域</span>5</div>
<div class="t" style="top:509.1px;height:35.0px;line-height:35.0px;font-size:25px;color:#222;left:538.0px;"><span class="c">等于</span></div>
<div class="a" style="left:43px;top:578px;width:1083px;height:2px;background:#efefef;"></div>
<div class="a" style="left:10px;top:548px;width:27px;height:27px;background:#ffffff;border:2px solid #333;box-sizing:border-box;"></div>
<div class="t" style="top:544.5px;height:35.0px;line-height:35.0px;font-size:25px;color:#222;left:89.0px;"><span class="c">构件</span></div>
<div class="t" style="top:544.5px;height:35.0px;line-height:35.0px;font-size:25px;color:#222;left:313.0px;"><span class="c">名称</span></div>
<div class="t" style="top:544.5px;height:35.0px;line-height:35.0px;font-size:25px;color:#222;left:538.0px;"><span class="c">等于</span></div>
<div class="a" style="left:43px;top:613px;width:1083px;height:2px;background:#efefef;"></div>
<div class="a" style="left:10px;top:583px;width:27px;height:27px;background:#ffffff;border:2px solid #333;box-sizing:border-box;"></div>
<div class="t" style="top:579.9px;height:35.0px;line-height:35.0px;font-size:25px;color:#222;left:89.0px;"><span class="c">构件</span></div>
<div class="t" style="top:579.9px;height:35.0px;line-height:35.0px;font-size:25px;color:#222;left:313.0px;"><span class="c">编号</span></div>
<div class="t" style="top:579.9px;height:35.0px;line-height:35.0px;font-size:25px;color:#222;left:538.0px;"><span class="c">等于</span></div>
<div class="a" style="left:43px;top:648px;width:1083px;height:2px;background:#efefef;"></div>
<div class="a" style="left:10px;top:618px;width:27px;height:27px;background:#ffffff;border:2px solid #333;box-sizing:border-box;"></div>
<div class="t" style="top:615.4px;height:35.0px;line-height:35.0px;font-size:25px;color:#222;left:89.0px;"><span class="c">构件</span></div>
<div class="t" style="top:615.4px;height:35.0px;line-height:35.0px;font-size:25px;color:#222;left:313.0px;"><span class="c">编号前缀</span></div>
<div class="t" style="top:615.4px;height:35.0px;line-height:35.0px;font-size:25px;color:#222;left:538.0px;"><span class="c">等于</span></div>
<div class="a" style="left:43px;top:684px;width:1083px;height:2px;background:#efefef;"></div>
<div class="a" style="left:10px;top:654px;width:27px;height:27px;background:#ffffff;border:2px solid #333;box-sizing:border-box;"></div>
<div class="t" style="top:650.8px;height:35.0px;line-height:35.0px;font-size:25px;color:#222;left:89.0px;"><span class="c">构件</span></div>
<div class="t" style="top:650.8px;height:35.0px;line-height:35.0px;font-size:25px;color:#222;left:313.0px;"><span class="c">开始编号</span></div>
<div class="t" style="top:650.8px;height:35.0px;line-height:35.0px;font-size:25px;color:#222;left:538.0px;"><span class="c">等于</span></div>
<div class="a" style="left:43px;top:719px;width:1083px;height:2px;background:#efefef;"></div>
<div class="a" style="left:10px;top:689px;width:27px;height:27px;background:#ffffff;border:2px solid #333;box-sizing:border-box;"></div>
<div class="t" style="top:686.3px;height:35.0px;line-height:35.0px;font-size:25px;color:#222;left:89.0px;"><span class="c">构件</span></div>
<div class="t" style="top:686.3px;height:35.0px;line-height:35.0px;font-size:25px;color:#222;left:313.0px;"><span class="c">图层</span></div>
<div class="t" style="top:686.3px;height:35.0px;line-height:35.0px;font-size:25px;color:#222;left:538.0px;"><span class="c">等于</span></div>
</div>
<div class="a" style="left:2714px;top:1508px;width:1126px;height:34px;background:#fafafa;"></div>
<div class="a" style="left:2752px;top:1511px;width:1088px;height:29px;background:#cdcdd0;"></div>
<svg class="a" style="left:2725px;top:1516px;" width="16" height="20" viewBox="0 0 16 20"><path d="M12 2L4 10l8 8" fill="none" stroke="#333" stroke-width="2.6"/></svg>
<div class="a" style="left:2715px;top:1598px;width:150px;height:42px;background:#e1e1e1;border:2px solid #adadad;box-sizing:border-box;"></div>
<div class="t" style="top:1601.5px;height:35.0px;line-height:35.0px;font-size:25px;color:#222;left:2190.0px;width:1200px;text-align:center;"><span class="c">新增</span></div>
<div class="a" style="left:2910px;top:1598px;width:150px;height:42px;background:#e1e1e1;border:2px solid #adadad;box-sizing:border-box;"></div>
<div class="t" style="top:1601.5px;height:35.0px;line-height:35.0px;font-size:25px;color:#222;left:2385.0px;width:1200px;text-align:center;"><span class="c">删除</span></div>
<div class="a" style="left:3103px;top:1598px;width:150px;height:42px;background:#e1e1e1;border:2px solid #adadad;box-sizing:border-box;"></div>
<div class="t" style="top:1601.5px;height:35.0px;line-height:35.0px;font-size:25px;color:#222;left:2578.0px;width:1200px;text-align:center;"><span class="c">重置</span></div>
<div class="a" style="left:3678px;top:1598px;width:150px;height:42px;background:#e1e1e1;border:3px solid #1a6ad8;box-sizing:border-box;"></div>
<div class="t" style="top:1601.5px;height:35.0px;line-height:35.0px;font-size:25px;color:#222;left:3153.0px;width:1200px;text-align:center;"><span class="c">确定</span></div>
<svg class="a" style="left:3512px;top:974px;" width="28" height="42" viewBox="0 0 28 42"><path d="M2 2v30l7-7 6 13 5-2-6-13h10z" fill="#fff" stroke="#111" stroke-width="2"/></svg>
<div class="a" style="left:62px;top:1853px;width:3778px;height:197px;background:#fbfbf9;"></div>
<div class="a" style="left:112px;top:1854px;width:3728px;height:8px;background:#f1f1f2;"></div>
<div class="a" style="left:112px;top:1862px;width:3728px;height:186px;background:#e6e6e8;"></div>
<div class="a" style="left:112px;top:2048px;width:3728px;height:2px;background:#d8d8da;"></div>
<svg class="a" style="left:77px;top:1876px;" width="24" height="24" viewBox="0 0 24 24"><path d="M2 2l20 20M22 2L2 22" stroke="#222" stroke-width="3"/></svg>
<div class="t" style="top:1866.5px;height:32.9px;line-height:32.9px;font-size:23.5px;color:#222;left:130.0px;"><span class="c">选择对象</span>:</div>
<div class="t" style="top:1895.5px;height:32.9px;line-height:32.9px;font-size:23.5px;color:#222;left:130.0px;"><span class="c">命令</span>:</div>
<div class="t" style="top:1898.0px;height:28.0px;line-height:28.0px;font-size:20px;color:#222;font-family:'Liberation Mono',monospace;left:206.0px;letter-spacing:0.4px;">POST_DISPLAY_FILTER_SOLID</div>
<div class="t" style="top:1924.8px;height:34.3px;line-height:34.3px;font-size:24.5px;color:#222;left:130.0px;"><span class="c">无激活筛选条件</span>!</div>
<div class="t" style="top:1983.5px;height:32.9px;line-height:32.9px;font-size:23.5px;color:#222;left:130.0px;"><span class="c">命令</span>:</div>
<div class="t" style="top:1986.0px;height:28.0px;line-height:28.0px;font-size:20px;color:#222;font-family:'Liberation Mono',monospace;left:206.0px;letter-spacing:0.4px;">POST_DISPLAY_FILTER_SOLID</div>
<div class="a" style="left:0px;top:2104px;width:3840px;height:56px;background:#f0f0f1;"></div>
<div class="a" style="left:62px;top:2050px;width:3778px;height:54px;background:#fcfcfa;"></div>
<div class="t" style="top:2061.2px;height:33.6px;line-height:33.6px;font-size:24px;color:#808080;left:135.0px;"><span class="c">输</span> <span class="c">入</span> <span class="c">命</span> <span class="c">令</span></div>
<div class="t" style="top:2117.8px;height:36.4px;line-height:36.4px;font-size:26px;color:#222;left:3160.0px;letter-spacing:0.36px;">-3270.25, 29568.89, 0.00</div>
<div class="t" style="top:2118.5px;height:35.0px;line-height:35.0px;font-size:25px;color:#222;left:3561.0px;">0 <span class="c">选择的物体</span></div>
<svg class="a" style="left:3730px;top:2118px;" width="30" height="32" viewBox="0 0 30 32"><path d="M3 2v28h26M3 20h8v10" fill="none" stroke="#222" stroke-width="2"/></svg>
<svg class="a" style="left:3790px;top:2115px;" width="42" height="42" viewBox="0 0 42 42"><rect x="2" y="2" width="38" height="38" fill="#9a9a9a" stroke="#555" stroke-width="2"/><rect x="24" y="4" width="12" height="12" fill="#ccc" stroke="#444" stroke-width="2"/><path d="M30 16v24" stroke="#444" stroke-width="2"/></svg>
</body></html>
